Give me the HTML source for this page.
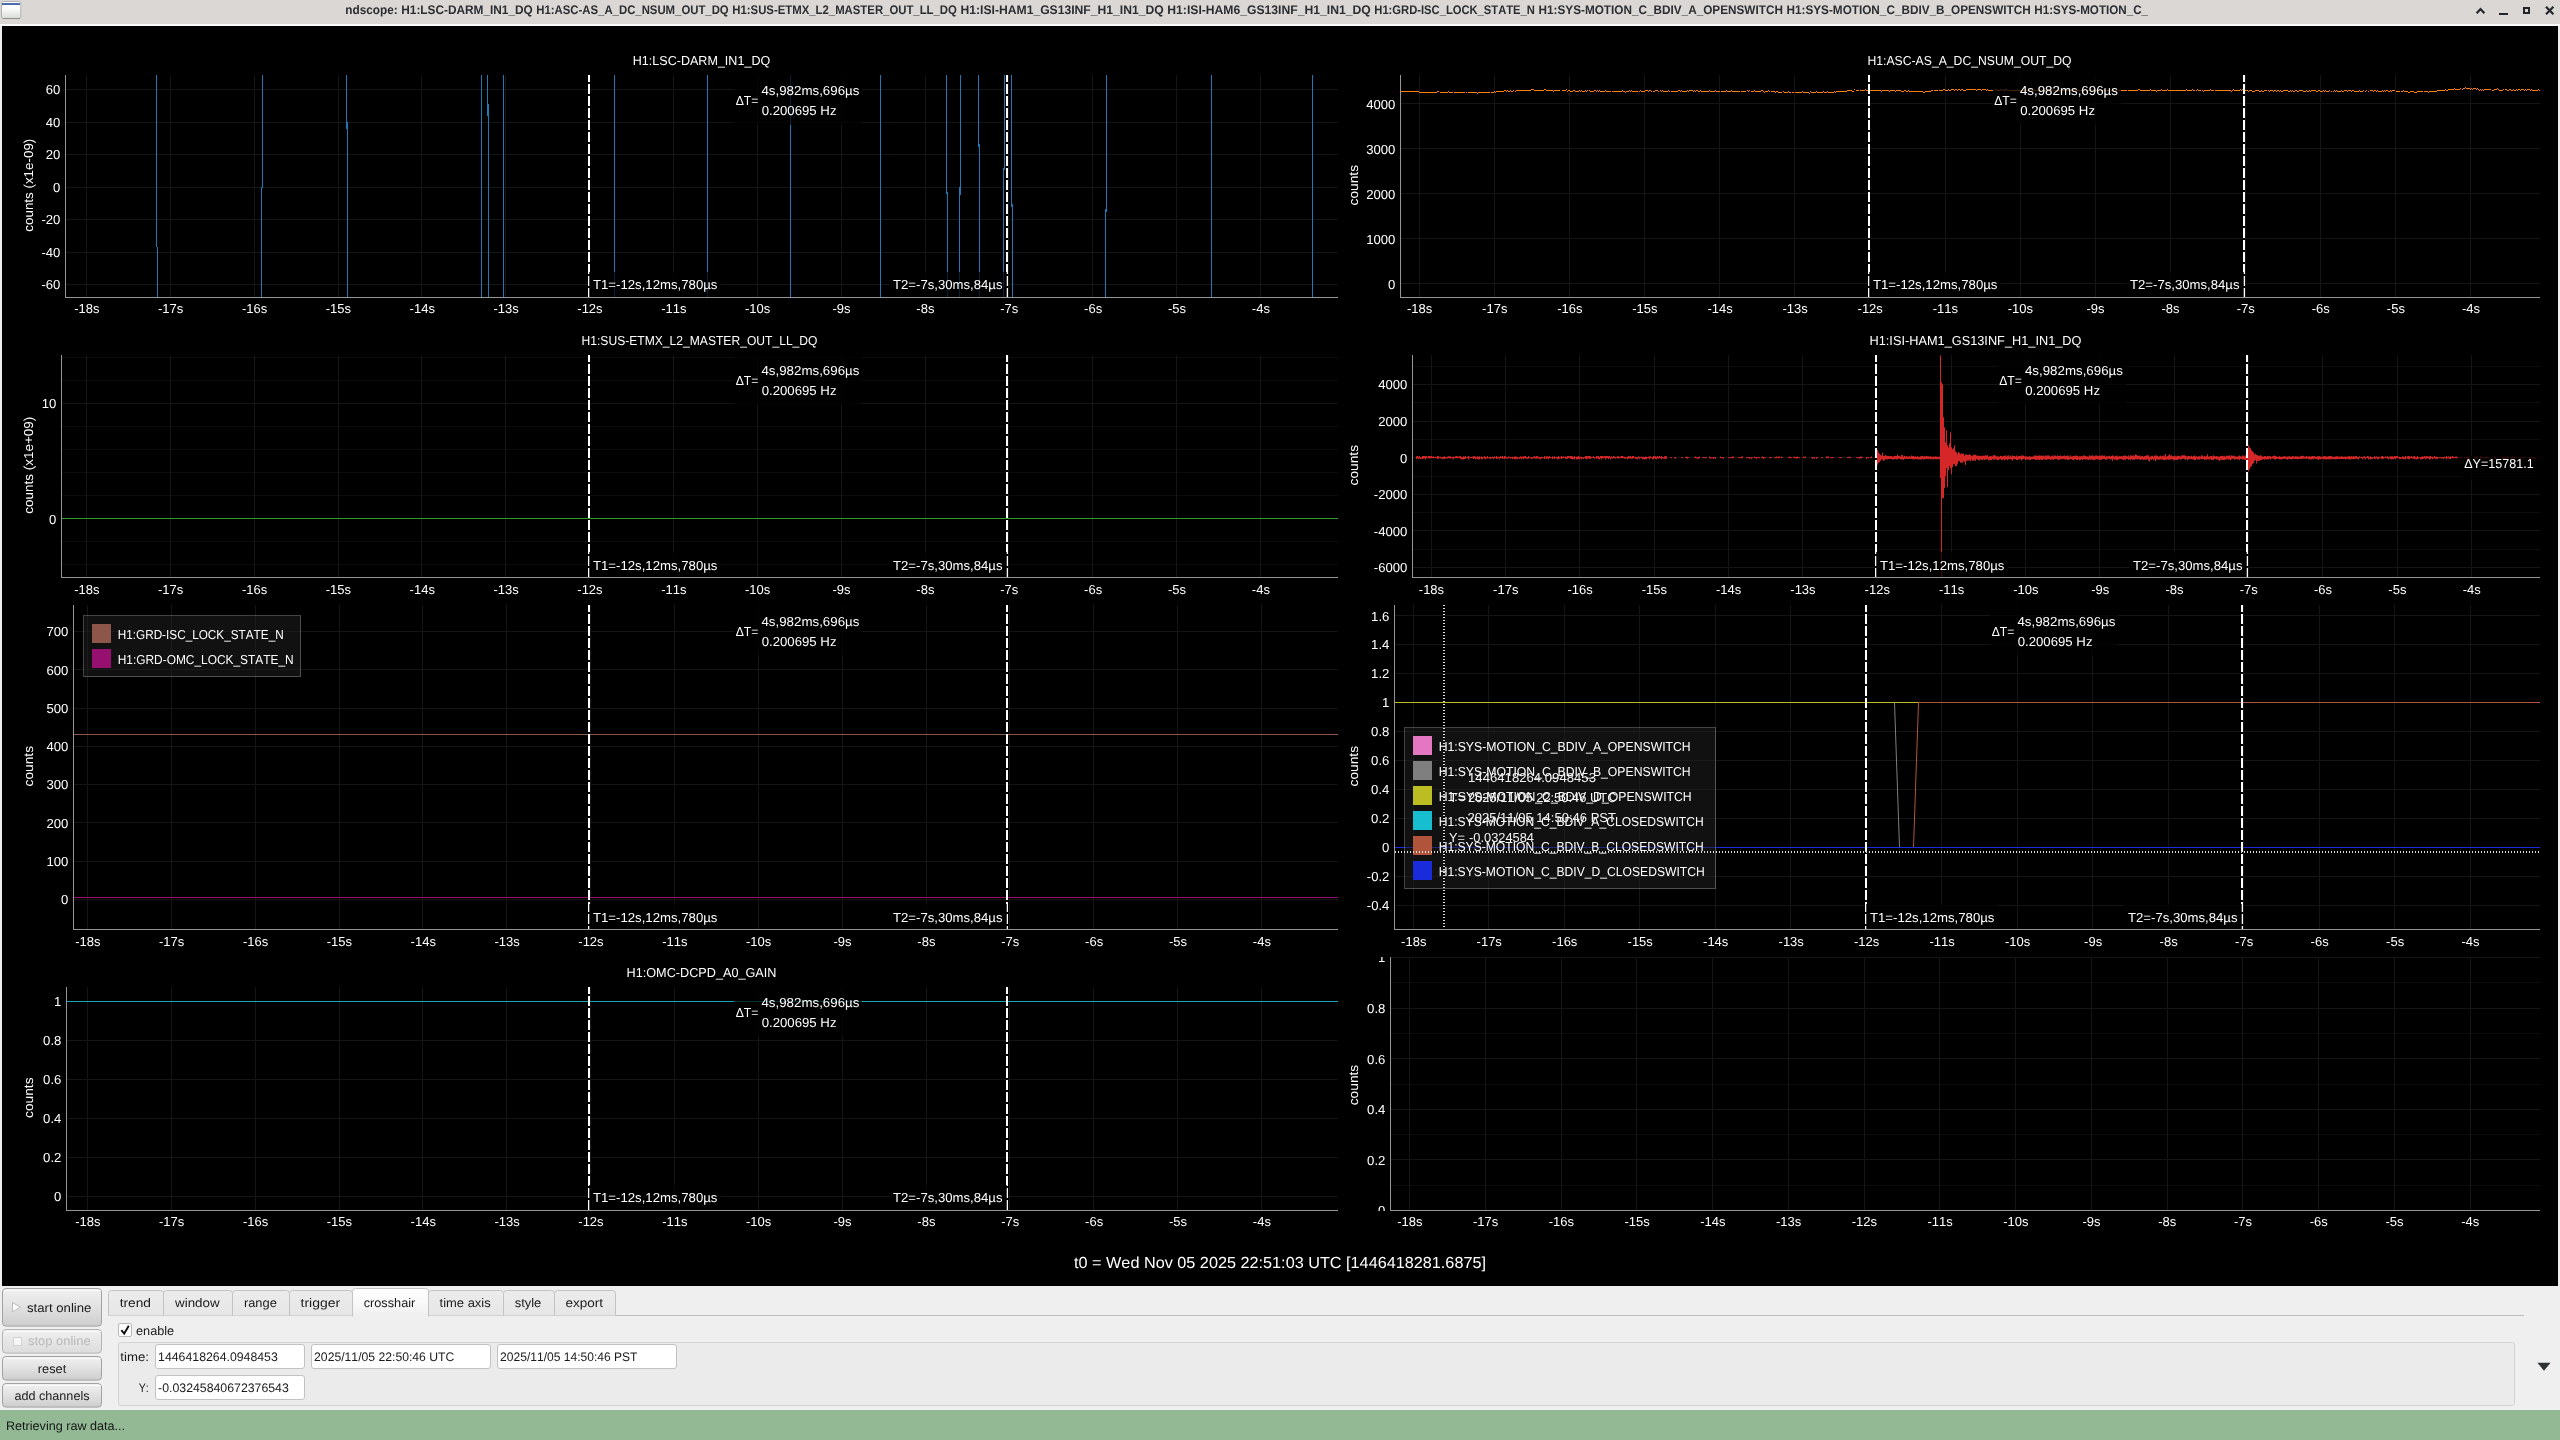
<!DOCTYPE html><html><head><meta charset="utf-8"><title>ndscope</title>
<style>html,body{margin:0;padding:0;background:#efefef;overflow:hidden}svg{display:block;will-change:transform;font-family:"Liberation Sans",sans-serif}text{white-space:pre;font-kerning:none}</style></head><body>
<svg width="2560" height="1440" viewBox="0 0 2560 1440" shape-rendering="crispEdges" text-rendering="geometricPrecision">
<defs>
<linearGradient id="btn" x1="0" y1="0" x2="0" y2="1"><stop offset="0" stop-color="#f1f1f1"/><stop offset="0.5" stop-color="#e1e1e1"/><stop offset="1" stop-color="#cdcdcd"/></linearGradient>
<linearGradient id="btnd" x1="0" y1="0" x2="0" y2="1"><stop offset="0" stop-color="#f0f0f0"/><stop offset="1" stop-color="#dcdcdc"/></linearGradient>
<linearGradient id="ico" x1="0" y1="0" x2="0" y2="1"><stop offset="0" stop-color="#ffffff"/><stop offset="0.35" stop-color="#ffffff"/><stop offset="1" stop-color="#d9dcd8"/></linearGradient>
<linearGradient id="tabg" x1="0" y1="0" x2="0" y2="1"><stop offset="0" stop-color="#ececec"/><stop offset="1" stop-color="#e6e6e6"/></linearGradient>
<clipPath id="clipH"><rect x="1340" y="957" width="60" height="254"/></clipPath>
<linearGradient id="tabs" x1="0" y1="0" x2="0" y2="1"><stop offset="0" stop-color="#ffffff"/><stop offset="0.5" stop-color="#f9f9f9"/><stop offset="1" stop-color="#efefef"/></linearGradient>
</defs>
<rect x="0" y="0" width="2560" height="1440" fill="#efefef"/>
<rect x="0" y="0" width="2560" height="24" fill="#dbd7d4"/>
<rect x="0" y="24" width="2560" height="2" fill="#fbfbfa"/>
<rect x="2" y="26" width="2556" height="1260" fill="#000"/>
<rect x="0" y="1410" width="2560" height="30" fill="#92b993"/>
<rect x="1.5" y="1.5" width="19.3" height="17" rx="2" fill="url(#ico)" stroke="#b3b3b3" shape-rendering="auto"/>
<rect x="2" y="3" width="18.3" height="2" fill="#4a6ea9"/>
<rect x="3" y="18" width="16.5" height="1" fill="#8e8e8c"/>
<text x="345.30" y="14.40" font-size="12.5" fill="#2a2e32" textLength="52.4" lengthAdjust="spacingAndGlyphs" font-weight="bold">ndscope:</text>
<text x="401.30" y="14.40" font-size="12.5" fill="#2a2e32" textLength="131.4" lengthAdjust="spacingAndGlyphs" font-weight="bold">H1:LSC-DARM_IN1_DQ</text>
<text x="536.30" y="14.40" font-size="12.5" fill="#2a2e32" textLength="192.4" lengthAdjust="spacingAndGlyphs" font-weight="bold">H1:ASC-AS_A_DC_NSUM_OUT_DQ</text>
<text x="732.30" y="14.40" font-size="12.5" fill="#2a2e32" textLength="224.6" lengthAdjust="spacingAndGlyphs" font-weight="bold">H1:SUS-ETMX_L2_MASTER_OUT_LL_DQ</text>
<text x="960.50" y="14.40" font-size="12.5" fill="#2a2e32" textLength="203.2" lengthAdjust="spacingAndGlyphs" font-weight="bold">H1:ISI-HAM1_GS13INF_H1_IN1_DQ</text>
<text x="1167.30" y="14.40" font-size="12.5" fill="#2a2e32" textLength="203.4" lengthAdjust="spacingAndGlyphs" font-weight="bold">H1:ISI-HAM6_GS13INF_H1_IN1_DQ</text>
<text x="1374.30" y="14.40" font-size="12.5" fill="#2a2e32" textLength="160.6" lengthAdjust="spacingAndGlyphs" font-weight="bold">H1:GRD-ISC_LOCK_STATE_N</text>
<text x="1538.50" y="14.40" font-size="12.5" fill="#2a2e32" textLength="244.4" lengthAdjust="spacingAndGlyphs" font-weight="bold">H1:SYS-MOTION_C_BDIV_A_OPENSWITCH</text>
<text x="1786.50" y="14.40" font-size="12.5" fill="#2a2e32" textLength="244.2" lengthAdjust="spacingAndGlyphs" font-weight="bold">H1:SYS-MOTION_C_BDIV_B_OPENSWITCH</text>
<text x="2034.30" y="14.40" font-size="12.5" fill="#2a2e32" textLength="113.7" lengthAdjust="spacingAndGlyphs" font-weight="bold">H1:SYS-MOTION_C_</text>
<path d="M2476.6 13.2 L2480.5 9 L2484.4 13.2" fill="none" stroke="#23272b" stroke-width="2.2" shape-rendering="auto"/>
<rect x="2499" y="13" width="9" height="2" fill="#23272b"/>
<rect x="2524" y="8" width="5" height="5" fill="none" stroke="#23272b" stroke-width="2"/>
<path d="M2546 6.8 L2553.4 14.2 M2553.4 6.8 L2546 14.2" fill="none" stroke="#23272b" stroke-width="2.2" shape-rendering="auto"/>
<rect x="66" y="89" width="1272" height="1" fill="#151515"/>
<rect x="66" y="122" width="1272" height="1" fill="#151515"/>
<rect x="66" y="154" width="1272" height="1" fill="#151515"/>
<rect x="66" y="187" width="1272" height="1" fill="#151515"/>
<rect x="66" y="219" width="1272" height="1" fill="#151515"/>
<rect x="66" y="252" width="1272" height="1" fill="#151515"/>
<rect x="66" y="284" width="1272" height="1" fill="#151515"/>
<rect x="86" y="75" width="1" height="222" fill="#151515"/>
<rect x="170" y="75" width="1" height="222" fill="#151515"/>
<rect x="254" y="75" width="1" height="222" fill="#151515"/>
<rect x="338" y="75" width="1" height="222" fill="#151515"/>
<rect x="421" y="75" width="1" height="222" fill="#151515"/>
<rect x="505" y="75" width="1" height="222" fill="#151515"/>
<rect x="589" y="75" width="1" height="222" fill="#151515"/>
<rect x="673" y="75" width="1" height="222" fill="#151515"/>
<rect x="757" y="75" width="1" height="222" fill="#151515"/>
<rect x="841" y="75" width="1" height="222" fill="#151515"/>
<rect x="925" y="75" width="1" height="222" fill="#151515"/>
<rect x="1008" y="75" width="1" height="222" fill="#151515"/>
<rect x="1092" y="75" width="1" height="222" fill="#151515"/>
<rect x="1176" y="75" width="1" height="222" fill="#151515"/>
<rect x="1260" y="75" width="1" height="222" fill="#151515"/>
<rect x="156" y="75" width="1" height="172" fill="#1f77b4"/>
<rect x="157" y="247" width="1" height="50" fill="#1f77b4"/>
<rect x="262" y="75" width="1" height="113" fill="#1f77b4"/>
<rect x="261" y="187" width="1" height="110" fill="#1f77b4"/>
<rect x="346" y="75" width="1" height="54" fill="#1f77b4"/>
<rect x="347" y="122" width="1" height="175" fill="#1f77b4"/>
<rect x="481" y="75" width="1" height="222" fill="#1f77b4"/>
<rect x="487" y="75" width="1" height="41" fill="#1f77b4"/>
<rect x="488" y="104" width="1" height="193" fill="#1f77b4"/>
<rect x="503" y="75" width="1" height="222" fill="#1f77b4"/>
<rect x="614" y="75" width="1" height="222" fill="#1f77b4"/>
<rect x="707" y="75" width="1" height="222" fill="#1f77b4"/>
<rect x="790" y="75" width="1" height="222" fill="#1f77b4"/>
<rect x="880" y="75" width="1" height="222" fill="#1f77b4"/>
<rect x="946" y="75" width="1" height="119" fill="#1f77b4"/>
<rect x="947" y="192" width="1" height="105" fill="#1f77b4"/>
<rect x="960" y="75" width="1" height="120" fill="#1f77b4"/>
<rect x="959" y="187" width="1" height="110" fill="#1f77b4"/>
<rect x="978" y="75" width="1" height="72" fill="#1f77b4"/>
<rect x="979" y="144" width="1" height="153" fill="#1f77b4"/>
<rect x="1004" y="75" width="1" height="95" fill="#1f77b4"/>
<rect x="1003" y="168" width="1" height="129" fill="#1f77b4"/>
<rect x="1011" y="75" width="1" height="132" fill="#1f77b4"/>
<rect x="1012" y="204" width="1" height="93" fill="#1f77b4"/>
<rect x="1106" y="75" width="1" height="137" fill="#1f77b4"/>
<rect x="1105" y="209" width="1" height="88" fill="#1f77b4"/>
<rect x="1211" y="75" width="1" height="222" fill="#1f77b4"/>
<rect x="1312" y="75" width="1" height="222" fill="#1f77b4"/>
<line x1="589" y1="75" x2="589" y2="297" stroke="#fff" stroke-width="2" stroke-dasharray="10 2" stroke-dashoffset="2.8"/>
<line x1="1007" y1="75" x2="1007" y2="297" stroke="#fff" stroke-width="2" stroke-dasharray="10 2" stroke-dashoffset="2.8"/>
<rect x="589" y="272" width="132" height="25" fill="#000" fill-opacity="0.72"/>
<text x="593.00" y="289.00" font-size="13" fill="#ffffff" textLength="124.4" lengthAdjust="spacingAndGlyphs">T1=-12s,12ms,780µs</text>
<rect x="889" y="272" width="118" height="25" fill="#000" fill-opacity="0.72"/>
<text x="1002.50" y="289.00" font-size="13" fill="#ffffff" textLength="109.5" lengthAdjust="spacingAndGlyphs" text-anchor="end">T2=-7s,30ms,84µs</text>
<rect x="734.0" y="75" width="128" height="50" fill="#000" fill-opacity="0.72"/>
<text x="758.30" y="104.60" font-size="13" fill="#ffffff" textLength="22.6" lengthAdjust="spacingAndGlyphs" text-anchor="end">ΔT=</text>
<text x="761.40" y="95.00" font-size="13" fill="#ffffff" textLength="98.0" lengthAdjust="spacingAndGlyphs">4s,982ms,696µs</text>
<text x="761.70" y="115.00" font-size="13" fill="#ffffff" textLength="74.8" lengthAdjust="spacingAndGlyphs">0.200695 Hz</text>
<rect x="65" y="75" width="1" height="223" fill="#969696"/>
<rect x="65" y="297" width="1273" height="1" fill="#969696"/>
<text x="60.40" y="94.30" font-size="13" fill="#ffffff" textLength="14.6" lengthAdjust="spacingAndGlyphs" text-anchor="end">60</text>
<text x="60.40" y="126.80" font-size="13" fill="#ffffff" textLength="14.6" lengthAdjust="spacingAndGlyphs" text-anchor="end">40</text>
<text x="60.40" y="159.30" font-size="13" fill="#ffffff" textLength="14.6" lengthAdjust="spacingAndGlyphs" text-anchor="end">20</text>
<text x="60.40" y="191.80" font-size="13" fill="#ffffff" textLength="7.3" lengthAdjust="spacingAndGlyphs" text-anchor="end">0</text>
<text x="60.40" y="224.30" font-size="13" fill="#ffffff" textLength="19.0" lengthAdjust="spacingAndGlyphs" text-anchor="end">-20</text>
<text x="60.40" y="256.80" font-size="13" fill="#ffffff" textLength="19.0" lengthAdjust="spacingAndGlyphs" text-anchor="end">-40</text>
<text x="60.40" y="289.30" font-size="13" fill="#ffffff" textLength="19.0" lengthAdjust="spacingAndGlyphs" text-anchor="end">-60</text>
<text x="86.80" y="312.90" font-size="13" fill="#ffffff" textLength="25.3" lengthAdjust="spacingAndGlyphs" text-anchor="middle">-18s</text>
<text x="170.66" y="312.90" font-size="13" fill="#ffffff" textLength="25.3" lengthAdjust="spacingAndGlyphs" text-anchor="middle">-17s</text>
<text x="254.53" y="312.90" font-size="13" fill="#ffffff" textLength="25.3" lengthAdjust="spacingAndGlyphs" text-anchor="middle">-16s</text>
<text x="338.39" y="312.90" font-size="13" fill="#ffffff" textLength="25.3" lengthAdjust="spacingAndGlyphs" text-anchor="middle">-15s</text>
<text x="422.25" y="312.90" font-size="13" fill="#ffffff" textLength="25.3" lengthAdjust="spacingAndGlyphs" text-anchor="middle">-14s</text>
<text x="506.11" y="312.90" font-size="13" fill="#ffffff" textLength="25.3" lengthAdjust="spacingAndGlyphs" text-anchor="middle">-13s</text>
<text x="589.97" y="312.90" font-size="13" fill="#ffffff" textLength="25.3" lengthAdjust="spacingAndGlyphs" text-anchor="middle">-12s</text>
<text x="673.83" y="312.90" font-size="13" fill="#ffffff" textLength="25.3" lengthAdjust="spacingAndGlyphs" text-anchor="middle">-11s</text>
<text x="757.69" y="312.90" font-size="13" fill="#ffffff" textLength="25.3" lengthAdjust="spacingAndGlyphs" text-anchor="middle">-10s</text>
<text x="841.55" y="312.90" font-size="13" fill="#ffffff" textLength="18.1" lengthAdjust="spacingAndGlyphs" text-anchor="middle">-9s</text>
<text x="925.41" y="312.90" font-size="13" fill="#ffffff" textLength="18.1" lengthAdjust="spacingAndGlyphs" text-anchor="middle">-8s</text>
<text x="1009.27" y="312.90" font-size="13" fill="#ffffff" textLength="18.1" lengthAdjust="spacingAndGlyphs" text-anchor="middle">-7s</text>
<text x="1093.13" y="312.90" font-size="13" fill="#ffffff" textLength="18.1" lengthAdjust="spacingAndGlyphs" text-anchor="middle">-6s</text>
<text x="1176.99" y="312.90" font-size="13" fill="#ffffff" textLength="18.1" lengthAdjust="spacingAndGlyphs" text-anchor="middle">-5s</text>
<text x="1260.85" y="312.90" font-size="13" fill="#ffffff" textLength="18.1" lengthAdjust="spacingAndGlyphs" text-anchor="middle">-4s</text>
<text x="701.50" y="65.00" font-size="13" fill="#ffffff" textLength="137.5" lengthAdjust="spacingAndGlyphs" text-anchor="middle">H1:LSC-DARM_IN1_DQ</text>
<text x="33.40" y="185.20" font-size="13" fill="#ffffff" textLength="93.0" lengthAdjust="spacingAndGlyphs" text-anchor="middle" transform="rotate(-90 33.40 185.20)">counts (x1e-09)</text>
<rect x="1401" y="103" width="1139" height="1" fill="#151515"/>
<rect x="1401" y="148" width="1139" height="1" fill="#151515"/>
<rect x="1401" y="193" width="1139" height="1" fill="#151515"/>
<rect x="1401" y="238" width="1139" height="1" fill="#151515"/>
<rect x="1401" y="283" width="1139" height="1" fill="#151515"/>
<rect x="1419" y="75" width="1" height="222" fill="#151515"/>
<rect x="1494" y="75" width="1" height="222" fill="#151515"/>
<rect x="1569" y="75" width="1" height="222" fill="#151515"/>
<rect x="1644" y="75" width="1" height="222" fill="#151515"/>
<rect x="1719" y="75" width="1" height="222" fill="#151515"/>
<rect x="1794" y="75" width="1" height="222" fill="#151515"/>
<rect x="1869" y="75" width="1" height="222" fill="#151515"/>
<rect x="1945" y="75" width="1" height="222" fill="#151515"/>
<rect x="2020" y="75" width="1" height="222" fill="#151515"/>
<rect x="2095" y="75" width="1" height="222" fill="#151515"/>
<rect x="2170" y="75" width="1" height="222" fill="#151515"/>
<rect x="2245" y="75" width="1" height="222" fill="#151515"/>
<rect x="2320" y="75" width="1" height="222" fill="#151515"/>
<rect x="2395" y="75" width="1" height="222" fill="#151515"/>
<rect x="2470" y="75" width="1" height="222" fill="#151515"/>
<path d="M1401 91h18v1h-18zM1419 92h18v1h-18zM1437 91h2v1h-2zM1440 92h8v1h-8zM1448 91h1v1h-1zM1449 92h4v1h-4zM1454 92h11v1h-11zM1466 92h1v1h-1zM1468 92h9v1h-9zM1477 93h1v1h-1zM1478 92h12v1h-12zM1491 92h3v1h-3zM1494 91h1v1h-1zM1495 92h1v1h-1zM1496 91h8v1h-8zM1504 90h2v1h-2zM1506 91h1v1h-1zM1507 90h1v1h-1zM1508 91h2v1h-2zM1510 90h1v1h-1zM1511 91h2v1h-2zM1513 90h1v1h-1zM1515 91h1v1h-1zM1516 90h15v1h-15zM1531 89h3v1h-3zM1534 90h10v1h-10zM1544 89h2v1h-2zM1546 90h7v1h-7zM1553 91h1v1h-1zM1554 90h6v1h-6zM1562 90h4v1h-4zM1566 89h1v1h-1zM1567 91h1v1h-1zM1568 90h2v1h-2zM1570 91h3v1h-3zM1573 90h2v1h-2zM1575 91h4v1h-4zM1579 90h1v1h-1zM1580 91h1v1h-1zM1581 90h1v1h-1zM1582 91h3v1h-3zM1585 90h1v1h-1zM1586 91h1v1h-1zM1587 90h1v1h-1zM1589 90h1v1h-1zM1590 91h4v1h-4zM1594 90h2v1h-2zM1596 91h1v1h-1zM1597 90h1v1h-1zM1598 91h1v1h-1zM1599 90h1v1h-1zM1600 91h5v1h-5zM1605 90h1v1h-1zM1606 91h5v1h-5zM1612 91h10v1h-10zM1622 90h1v1h-1zM1623 91h2v1h-2zM1625 92h1v1h-1zM1626 91h3v1h-3zM1629 90h1v1h-1zM1630 91h1v1h-1zM1631 90h1v1h-1zM1632 91h6v1h-6zM1639 91h1v1h-1zM1640 90h1v1h-1zM1641 91h4v1h-4zM1645 90h3v1h-3zM1648 91h1v1h-1zM1649 90h2v1h-2zM1651 91h1v1h-1zM1653 91h2v1h-2zM1655 90h3v1h-3zM1658 91h1v1h-1zM1660 90h1v1h-1zM1661 91h1v1h-1zM1662 90h1v1h-1zM1663 91h5v1h-5zM1668 90h1v1h-1zM1669 91h1v1h-1zM1671 91h7v1h-7zM1678 90h2v1h-2zM1680 91h1v1h-1zM1681 90h1v1h-1zM1682 91h5v1h-5zM1687 90h1v1h-1zM1688 91h1v1h-1zM1689 90h4v1h-4zM1693 91h1v1h-1zM1694 90h1v1h-1zM1695 91h1v1h-1zM1696 90h2v1h-2zM1698 91h2v1h-2zM1700 90h1v1h-1zM1701 91h8v1h-8zM1709 90h1v1h-1zM1710 91h5v1h-5zM1715 90h1v1h-1zM1716 91h4v1h-4zM1721 91h5v1h-5zM1726 90h1v1h-1zM1727 91h4v1h-4zM1731 90h1v1h-1zM1732 91h8v1h-8zM1741 91h5v1h-5zM1747 90h1v1h-1zM1748 91h1v1h-1zM1749 90h1v1h-1zM1751 91h3v1h-3zM1754 90h1v1h-1zM1755 91h6v1h-6zM1761 90h2v1h-2zM1763 91h1v1h-1zM1764 92h1v1h-1zM1765 91h3v1h-3zM1768 90h1v1h-1zM1769 91h1v1h-1zM1771 91h4v1h-4zM1775 92h1v1h-1zM1776 91h2v1h-2zM1778 92h4v1h-4zM1783 91h1v1h-1zM1784 92h4v1h-4zM1788 91h1v1h-1zM1789 92h2v1h-2zM1792 92h2v1h-2zM1795 92h7v1h-7zM1802 91h1v1h-1zM1803 92h6v1h-6zM1809 93h1v1h-1zM1810 91h1v1h-1zM1811 92h5v1h-5zM1816 91h1v1h-1zM1817 92h6v1h-6zM1823 91h1v1h-1zM1824 92h3v1h-3zM1827 91h1v1h-1zM1828 92h6v1h-6zM1834 91h1v1h-1zM1835 92h1v1h-1zM1836 91h11v1h-11zM1847 90h5v1h-5zM1852 91h2v1h-2zM1854 89h1v1h-1zM1856 90h3v1h-3zM1860 90h5v1h-5zM1865 89h1v1h-1zM1866 90h2v1h-2zM1868 89h1v1h-1zM1869 91h1v1h-1zM1870 90h11v1h-11zM1881 91h1v1h-1zM1882 90h7v1h-7zM1889 91h1v1h-1zM1890 90h5v1h-5zM1895 91h1v1h-1zM1896 90h5v1h-5zM1901 91h3v1h-3zM1904 90h2v1h-2zM1906 91h2v1h-2zM1908 90h1v1h-1zM1909 91h14v1h-14zM1923 92h2v1h-2zM1925 91h6v1h-6zM1931 90h2v1h-2zM1934 90h4v1h-4zM1939 90h4v1h-4zM1943 89h2v1h-2zM1945 90h3v1h-3zM1948 89h1v1h-1zM1949 90h2v1h-2zM1951 89h3v1h-3zM1954 90h1v1h-1zM1955 89h2v1h-2zM1957 90h1v1h-1zM1958 89h2v1h-2zM1960 90h1v1h-1zM1961 89h2v1h-2zM1963 90h3v1h-3zM1966 89h10v1h-10zM1976 90h1v1h-1zM1977 89h4v1h-4zM1981 90h1v1h-1zM1982 89h4v1h-4zM1986 90h1v1h-1zM1987 89h1v1h-1zM1988 90h5v1h-5zM1994 90h1v1h-1zM1995 89h2v1h-2zM1997 90h3v1h-3zM2000 89h1v1h-1zM2001 90h1v1h-1zM2002 89h1v1h-1zM2003 90h2v1h-2zM2005 89h2v1h-2zM2007 90h2v1h-2zM2010 90h7v1h-7zM2017 89h1v1h-1zM2018 90h12v1h-12zM2030 89h1v1h-1zM2031 90h5v1h-5zM2037 90h2v1h-2zM2039 89h1v1h-1zM2040 90h1v1h-1zM2041 89h1v1h-1zM2042 90h4v1h-4zM2046 89h1v1h-1zM2047 90h1v1h-1zM2048 89h1v1h-1zM2049 90h3v1h-3zM2052 89h1v1h-1zM2053 90h21v1h-21zM2074 89h1v1h-1zM2075 90h10v1h-10zM2085 89h1v1h-1zM2086 90h5v1h-5zM2091 89h1v1h-1zM2092 90h1v1h-1zM2093 89h1v1h-1zM2094 90h16v1h-16zM2110 91h1v1h-1zM2111 90h1v1h-1zM2112 89h1v1h-1zM2113 90h4v1h-4zM2118 90h9v1h-9zM2128 90h10v1h-10zM2138 89h2v1h-2zM2140 90h10v1h-10zM2150 89h1v1h-1zM2151 90h5v1h-5zM2156 91h1v1h-1zM2157 90h4v1h-4zM2161 89h1v1h-1zM2162 90h5v1h-5zM2167 89h1v1h-1zM2168 90h18v1h-18zM2186 89h1v1h-1zM2187 90h5v1h-5zM2192 89h1v1h-1zM2193 90h2v1h-2zM2196 90h1v1h-1zM2197 89h1v1h-1zM2198 90h3v1h-3zM2202 90h1v1h-1zM2203 91h1v1h-1zM2204 90h6v1h-6zM2210 89h1v1h-1zM2211 90h3v1h-3zM2215 90h16v1h-16zM2231 91h1v1h-1zM2232 90h1v1h-1zM2233 89h1v1h-1zM2234 90h6v1h-6zM2240 89h1v1h-1zM2241 90h1v1h-1zM2242 89h1v1h-1zM2243 90h5v1h-5zM2248 91h1v1h-1zM2249 90h3v1h-3zM2252 91h3v1h-3zM2255 90h4v1h-4zM2259 91h2v1h-2zM2261 90h1v1h-1zM2262 91h2v1h-2zM2264 90h3v1h-3zM2268 90h1v1h-1zM2269 91h1v1h-1zM2270 90h3v1h-3zM2273 91h1v1h-1zM2274 90h2v1h-2zM2276 91h1v1h-1zM2277 90h2v1h-2zM2279 91h1v1h-1zM2280 90h1v1h-1zM2281 91h2v1h-2zM2283 90h5v1h-5zM2288 91h2v1h-2zM2290 90h1v1h-1zM2291 91h1v1h-1zM2292 90h1v1h-1zM2293 91h2v1h-2zM2295 90h2v1h-2zM2297 91h2v1h-2zM2299 90h4v1h-4zM2303 91h3v1h-3zM2306 90h1v1h-1zM2307 91h2v1h-2zM2309 90h1v1h-1zM2310 91h1v1h-1zM2311 90h5v1h-5zM2316 91h2v1h-2zM2318 90h2v1h-2zM2320 91h3v1h-3zM2323 90h1v1h-1zM2324 91h1v1h-1zM2325 90h1v1h-1zM2326 91h3v1h-3zM2329 90h1v1h-1zM2331 91h1v1h-1zM2333 91h1v1h-1zM2334 90h1v1h-1zM2335 91h1v1h-1zM2336 90h1v1h-1zM2337 91h4v1h-4zM2341 90h1v1h-1zM2342 91h2v1h-2zM2344 90h3v1h-3zM2347 91h1v1h-1zM2348 90h3v1h-3zM2351 91h1v1h-1zM2352 90h2v1h-2zM2354 91h5v1h-5zM2359 90h1v1h-1zM2360 91h3v1h-3zM2363 90h1v1h-1zM2365 91h1v1h-1zM2366 90h1v1h-1zM2368 91h1v1h-1zM2370 90h3v1h-3zM2373 91h1v1h-1zM2374 90h2v1h-2zM2376 91h1v1h-1zM2377 90h1v1h-1zM2378 91h4v1h-4zM2382 90h1v1h-1zM2383 91h1v1h-1zM2384 90h1v1h-1zM2385 91h1v1h-1zM2386 90h2v1h-2zM2388 91h2v1h-2zM2390 90h1v1h-1zM2391 91h1v1h-1zM2392 90h3v1h-3zM2396 91h4v1h-4zM2401 91h2v1h-2zM2403 90h1v1h-1zM2404 91h4v1h-4zM2408 92h2v1h-2zM2410 91h4v1h-4zM2414 92h3v1h-3zM2417 91h6v1h-6zM2424 91h4v1h-4zM2428 92h1v1h-1zM2429 91h8v1h-8zM2437 90h8v1h-8zM2445 89h1v1h-1zM2446 90h2v1h-2zM2448 89h6v1h-6zM2454 88h1v1h-1zM2455 89h5v1h-5zM2460 88h1v1h-1zM2462 89h1v1h-1zM2463 88h2v1h-2zM2465 87h1v1h-1zM2466 88h4v1h-4zM2470 89h1v1h-1zM2471 88h1v1h-1zM2472 89h1v1h-1zM2473 88h3v1h-3zM2476 89h1v1h-1zM2477 88h1v1h-1zM2478 89h1v1h-1zM2479 90h1v1h-1zM2480 89h1v1h-1zM2481 90h1v1h-1zM2482 89h1v1h-1zM2483 90h1v1h-1zM2484 89h7v1h-7zM2492 90h2v1h-2zM2494 89h3v1h-3zM2497 88h1v1h-1zM2498 89h1v1h-1zM2499 90h4v1h-4zM2503 89h1v1h-1zM2505 89h2v1h-2zM2507 90h2v1h-2zM2509 89h2v1h-2zM2511 90h2v1h-2zM2513 89h1v1h-1zM2514 90h2v1h-2zM2516 89h1v1h-1zM2517 90h1v1h-1zM2518 89h2v1h-2zM2520 90h1v1h-1zM2521 89h3v1h-3zM2524 90h1v1h-1zM2525 89h1v1h-1zM2526 90h1v1h-1zM2527 89h3v1h-3zM2530 90h1v1h-1zM2531 89h1v1h-1zM2532 90h6v1h-6zM2538 89h1v1h-1zM2539 90h1v1h-1z" fill="#ff7f0e"/>
<line x1="1869" y1="75" x2="1869" y2="297" stroke="#fff" stroke-width="2" stroke-dasharray="10 2" stroke-dashoffset="2.8"/>
<line x1="2244" y1="75" x2="2244" y2="297" stroke="#fff" stroke-width="2" stroke-dasharray="10 2" stroke-dashoffset="2.8"/>
<rect x="1869" y="272" width="132" height="25" fill="#000" fill-opacity="0.72"/>
<text x="1873.00" y="289.00" font-size="13" fill="#ffffff" textLength="124.4" lengthAdjust="spacingAndGlyphs">T1=-12s,12ms,780µs</text>
<rect x="2126" y="272" width="118" height="25" fill="#000" fill-opacity="0.72"/>
<text x="2239.50" y="289.00" font-size="13" fill="#ffffff" textLength="109.5" lengthAdjust="spacingAndGlyphs" text-anchor="end">T2=-7s,30ms,84µs</text>
<rect x="1992.5" y="75" width="128" height="50" fill="#000" fill-opacity="0.72"/>
<text x="2016.80" y="104.60" font-size="13" fill="#ffffff" textLength="22.6" lengthAdjust="spacingAndGlyphs" text-anchor="end">ΔT=</text>
<text x="2019.90" y="95.00" font-size="13" fill="#ffffff" textLength="98.0" lengthAdjust="spacingAndGlyphs">4s,982ms,696µs</text>
<text x="2020.20" y="115.00" font-size="13" fill="#ffffff" textLength="74.8" lengthAdjust="spacingAndGlyphs">0.200695 Hz</text>
<rect x="1400" y="75" width="1" height="223" fill="#969696"/>
<rect x="1400" y="297" width="1140" height="1" fill="#969696"/>
<text x="1395.40" y="108.55" font-size="13" fill="#ffffff" textLength="29.2" lengthAdjust="spacingAndGlyphs" text-anchor="end">4000</text>
<text x="1395.40" y="153.55" font-size="13" fill="#ffffff" textLength="29.2" lengthAdjust="spacingAndGlyphs" text-anchor="end">3000</text>
<text x="1395.40" y="198.55" font-size="13" fill="#ffffff" textLength="29.2" lengthAdjust="spacingAndGlyphs" text-anchor="end">2000</text>
<text x="1395.40" y="243.55" font-size="13" fill="#ffffff" textLength="29.2" lengthAdjust="spacingAndGlyphs" text-anchor="end">1000</text>
<text x="1395.40" y="288.55" font-size="13" fill="#ffffff" textLength="7.3" lengthAdjust="spacingAndGlyphs" text-anchor="end">0</text>
<text x="1419.66" y="312.90" font-size="13" fill="#ffffff" textLength="25.3" lengthAdjust="spacingAndGlyphs" text-anchor="middle">-18s</text>
<text x="1494.75" y="312.90" font-size="13" fill="#ffffff" textLength="25.3" lengthAdjust="spacingAndGlyphs" text-anchor="middle">-17s</text>
<text x="1569.84" y="312.90" font-size="13" fill="#ffffff" textLength="25.3" lengthAdjust="spacingAndGlyphs" text-anchor="middle">-16s</text>
<text x="1644.94" y="312.90" font-size="13" fill="#ffffff" textLength="25.3" lengthAdjust="spacingAndGlyphs" text-anchor="middle">-15s</text>
<text x="1720.03" y="312.90" font-size="13" fill="#ffffff" textLength="25.3" lengthAdjust="spacingAndGlyphs" text-anchor="middle">-14s</text>
<text x="1795.12" y="312.90" font-size="13" fill="#ffffff" textLength="25.3" lengthAdjust="spacingAndGlyphs" text-anchor="middle">-13s</text>
<text x="1870.21" y="312.90" font-size="13" fill="#ffffff" textLength="25.3" lengthAdjust="spacingAndGlyphs" text-anchor="middle">-12s</text>
<text x="1945.31" y="312.90" font-size="13" fill="#ffffff" textLength="25.3" lengthAdjust="spacingAndGlyphs" text-anchor="middle">-11s</text>
<text x="2020.40" y="312.90" font-size="13" fill="#ffffff" textLength="25.3" lengthAdjust="spacingAndGlyphs" text-anchor="middle">-10s</text>
<text x="2095.49" y="312.90" font-size="13" fill="#ffffff" textLength="18.1" lengthAdjust="spacingAndGlyphs" text-anchor="middle">-9s</text>
<text x="2170.58" y="312.90" font-size="13" fill="#ffffff" textLength="18.1" lengthAdjust="spacingAndGlyphs" text-anchor="middle">-8s</text>
<text x="2245.68" y="312.90" font-size="13" fill="#ffffff" textLength="18.1" lengthAdjust="spacingAndGlyphs" text-anchor="middle">-7s</text>
<text x="2320.77" y="312.90" font-size="13" fill="#ffffff" textLength="18.1" lengthAdjust="spacingAndGlyphs" text-anchor="middle">-6s</text>
<text x="2395.86" y="312.90" font-size="13" fill="#ffffff" textLength="18.1" lengthAdjust="spacingAndGlyphs" text-anchor="middle">-5s</text>
<text x="2470.95" y="312.90" font-size="13" fill="#ffffff" textLength="18.1" lengthAdjust="spacingAndGlyphs" text-anchor="middle">-4s</text>
<text x="1969.50" y="65.00" font-size="13" fill="#ffffff" textLength="204.0" lengthAdjust="spacingAndGlyphs" text-anchor="middle">H1:ASC-AS_A_DC_NSUM_OUT_DQ</text>
<text x="1358.00" y="185.20" font-size="13" fill="#ffffff" textLength="40.5" lengthAdjust="spacingAndGlyphs" text-anchor="middle" transform="rotate(-90 1358.00 185.20)">counts</text>
<rect x="62" y="357" width="1276" height="1" fill="#0d0d0d"/>
<rect x="62" y="380" width="1276" height="1" fill="#0d0d0d"/>
<rect x="62" y="426" width="1276" height="1" fill="#0d0d0d"/>
<rect x="62" y="449" width="1276" height="1" fill="#0d0d0d"/>
<rect x="62" y="472" width="1276" height="1" fill="#0d0d0d"/>
<rect x="62" y="495" width="1276" height="1" fill="#0d0d0d"/>
<rect x="62" y="541" width="1276" height="1" fill="#0d0d0d"/>
<rect x="62" y="564" width="1276" height="1" fill="#0d0d0d"/>
<rect x="62" y="403" width="1276" height="1" fill="#151515"/>
<rect x="62" y="518" width="1276" height="1" fill="#151515"/>
<rect x="86" y="355" width="1" height="222" fill="#151515"/>
<rect x="170" y="355" width="1" height="222" fill="#151515"/>
<rect x="254" y="355" width="1" height="222" fill="#151515"/>
<rect x="338" y="355" width="1" height="222" fill="#151515"/>
<rect x="421" y="355" width="1" height="222" fill="#151515"/>
<rect x="505" y="355" width="1" height="222" fill="#151515"/>
<rect x="589" y="355" width="1" height="222" fill="#151515"/>
<rect x="673" y="355" width="1" height="222" fill="#151515"/>
<rect x="757" y="355" width="1" height="222" fill="#151515"/>
<rect x="841" y="355" width="1" height="222" fill="#151515"/>
<rect x="925" y="355" width="1" height="222" fill="#151515"/>
<rect x="1008" y="355" width="1" height="222" fill="#151515"/>
<rect x="1092" y="355" width="1" height="222" fill="#151515"/>
<rect x="1176" y="355" width="1" height="222" fill="#151515"/>
<rect x="1260" y="355" width="1" height="222" fill="#151515"/>
<rect x="62" y="518" width="1276" height="1" fill="#2ca02c"/>
<line x1="589" y1="355" x2="589" y2="577" stroke="#fff" stroke-width="2" stroke-dasharray="10 2" stroke-dashoffset="2.8"/>
<line x1="1007" y1="355" x2="1007" y2="577" stroke="#fff" stroke-width="2" stroke-dasharray="10 2" stroke-dashoffset="2.8"/>
<rect x="589" y="552" width="132" height="25" fill="#000" fill-opacity="0.72"/>
<text x="593.00" y="570.00" font-size="13" fill="#ffffff" textLength="124.4" lengthAdjust="spacingAndGlyphs">T1=-12s,12ms,780µs</text>
<rect x="889" y="552" width="118" height="25" fill="#000" fill-opacity="0.72"/>
<text x="1002.50" y="570.00" font-size="13" fill="#ffffff" textLength="109.5" lengthAdjust="spacingAndGlyphs" text-anchor="end">T2=-7s,30ms,84µs</text>
<rect x="734.0" y="355" width="128" height="50" fill="#000" fill-opacity="0.72"/>
<text x="758.30" y="384.60" font-size="13" fill="#ffffff" textLength="22.6" lengthAdjust="spacingAndGlyphs" text-anchor="end">ΔT=</text>
<text x="761.40" y="375.00" font-size="13" fill="#ffffff" textLength="98.0" lengthAdjust="spacingAndGlyphs">4s,982ms,696µs</text>
<text x="761.70" y="395.00" font-size="13" fill="#ffffff" textLength="74.8" lengthAdjust="spacingAndGlyphs">0.200695 Hz</text>
<rect x="61" y="355" width="1" height="223" fill="#969696"/>
<rect x="61" y="577" width="1277" height="1" fill="#969696"/>
<text x="56.40" y="408.05" font-size="13" fill="#ffffff" textLength="14.6" lengthAdjust="spacingAndGlyphs" text-anchor="end">10</text>
<text x="56.40" y="523.55" font-size="13" fill="#ffffff" textLength="7.3" lengthAdjust="spacingAndGlyphs" text-anchor="end">0</text>
<text x="86.80" y="593.90" font-size="13" fill="#ffffff" textLength="25.3" lengthAdjust="spacingAndGlyphs" text-anchor="middle">-18s</text>
<text x="170.66" y="593.90" font-size="13" fill="#ffffff" textLength="25.3" lengthAdjust="spacingAndGlyphs" text-anchor="middle">-17s</text>
<text x="254.53" y="593.90" font-size="13" fill="#ffffff" textLength="25.3" lengthAdjust="spacingAndGlyphs" text-anchor="middle">-16s</text>
<text x="338.39" y="593.90" font-size="13" fill="#ffffff" textLength="25.3" lengthAdjust="spacingAndGlyphs" text-anchor="middle">-15s</text>
<text x="422.25" y="593.90" font-size="13" fill="#ffffff" textLength="25.3" lengthAdjust="spacingAndGlyphs" text-anchor="middle">-14s</text>
<text x="506.11" y="593.90" font-size="13" fill="#ffffff" textLength="25.3" lengthAdjust="spacingAndGlyphs" text-anchor="middle">-13s</text>
<text x="589.97" y="593.90" font-size="13" fill="#ffffff" textLength="25.3" lengthAdjust="spacingAndGlyphs" text-anchor="middle">-12s</text>
<text x="673.83" y="593.90" font-size="13" fill="#ffffff" textLength="25.3" lengthAdjust="spacingAndGlyphs" text-anchor="middle">-11s</text>
<text x="757.69" y="593.90" font-size="13" fill="#ffffff" textLength="25.3" lengthAdjust="spacingAndGlyphs" text-anchor="middle">-10s</text>
<text x="841.55" y="593.90" font-size="13" fill="#ffffff" textLength="18.1" lengthAdjust="spacingAndGlyphs" text-anchor="middle">-9s</text>
<text x="925.41" y="593.90" font-size="13" fill="#ffffff" textLength="18.1" lengthAdjust="spacingAndGlyphs" text-anchor="middle">-8s</text>
<text x="1009.27" y="593.90" font-size="13" fill="#ffffff" textLength="18.1" lengthAdjust="spacingAndGlyphs" text-anchor="middle">-7s</text>
<text x="1093.13" y="593.90" font-size="13" fill="#ffffff" textLength="18.1" lengthAdjust="spacingAndGlyphs" text-anchor="middle">-6s</text>
<text x="1176.99" y="593.90" font-size="13" fill="#ffffff" textLength="18.1" lengthAdjust="spacingAndGlyphs" text-anchor="middle">-5s</text>
<text x="1260.85" y="593.90" font-size="13" fill="#ffffff" textLength="18.1" lengthAdjust="spacingAndGlyphs" text-anchor="middle">-4s</text>
<text x="699.50" y="345.00" font-size="13" fill="#ffffff" textLength="236.0" lengthAdjust="spacingAndGlyphs" text-anchor="middle">H1:SUS-ETMX_L2_MASTER_OUT_LL_DQ</text>
<text x="33.40" y="465.20" font-size="13" fill="#ffffff" textLength="97.0" lengthAdjust="spacingAndGlyphs" text-anchor="middle" transform="rotate(-90 33.40 465.20)">counts (x1e+09)</text>
<rect x="1413" y="366" width="1127" height="1" fill="#0d0d0d"/>
<rect x="1413" y="402" width="1127" height="1" fill="#0d0d0d"/>
<rect x="1413" y="439" width="1127" height="1" fill="#0d0d0d"/>
<rect x="1413" y="476" width="1127" height="1" fill="#0d0d0d"/>
<rect x="1413" y="512" width="1127" height="1" fill="#0d0d0d"/>
<rect x="1413" y="549" width="1127" height="1" fill="#0d0d0d"/>
<rect x="1413" y="384" width="1127" height="1" fill="#151515"/>
<rect x="1413" y="421" width="1127" height="1" fill="#151515"/>
<rect x="1413" y="457" width="1127" height="1" fill="#151515"/>
<rect x="1413" y="494" width="1127" height="1" fill="#151515"/>
<rect x="1413" y="530" width="1127" height="1" fill="#151515"/>
<rect x="1413" y="567" width="1127" height="1" fill="#151515"/>
<rect x="1431" y="355" width="1" height="222" fill="#151515"/>
<rect x="1505" y="355" width="1" height="222" fill="#151515"/>
<rect x="1579" y="355" width="1" height="222" fill="#151515"/>
<rect x="1654" y="355" width="1" height="222" fill="#151515"/>
<rect x="1728" y="355" width="1" height="222" fill="#151515"/>
<rect x="1802" y="355" width="1" height="222" fill="#151515"/>
<rect x="1876" y="355" width="1" height="222" fill="#151515"/>
<rect x="1951" y="355" width="1" height="222" fill="#151515"/>
<rect x="2025" y="355" width="1" height="222" fill="#151515"/>
<rect x="2099" y="355" width="1" height="222" fill="#151515"/>
<rect x="2174" y="355" width="1" height="222" fill="#151515"/>
<rect x="2248" y="355" width="1" height="222" fill="#151515"/>
<rect x="2322" y="355" width="1" height="222" fill="#151515"/>
<rect x="2397" y="355" width="1" height="222" fill="#151515"/>
<rect x="2471" y="355" width="1" height="222" fill="#151515"/>
<path d="M1416.5 456.3V459.1M1417.5 456.0V458.2M1418.5 456.7V459.1M1419.5 456.0V458.2M1420.5 457.2V459.1M1421.5 457.2V458.7M1422.5 456.0V459.1M1423.5 456.0V458.7M1424.5 456.0V458.2M1425.5 456.3V459.4M1426.5 456.0V458.2M1427.5 457.2V458.2M1428.5 456.0V458.2M1429.5 456.0V458.7M1430.5 456.3V458.2M1431.5 456.0V458.2M1432.5 456.7V458.2M1433.5 456.3V458.2M1434.5 457.2V458.2M1435.5 456.7V458.2M1436.5 457.2V458.2M1437.5 456.0V458.7M1438.5 456.0V458.7M1439.5 457.2V458.2M1440.5 456.7V458.2M1441.5 457.2V458.7M1442.5 457.2V459.1M1443.5 456.7V458.7M1444.5 456.3V459.1M1445.5 457.2V458.7M1446.5 457.2V458.2M1447.5 456.7V458.7M1448.5 456.3V458.2M1449.5 456.3V458.2M1450.5 456.3V458.7M1451.5 457.2V458.2M1452.5 456.7V458.2M1453.5 456.7V459.4M1454.5 457.2V458.2M1455.5 456.3V458.2M1456.5 456.0V458.2M1457.5 456.3V458.2M1458.5 456.7V458.2M1459.5 456.3V458.2M1460.5 456.0V458.7M1461.5 457.2V459.4M1462.5 457.2V459.4M1463.5 456.3V459.4M1464.5 456.7V459.1M1465.5 456.0V458.7M1466.5 457.2V458.2M1467.5 456.7V458.2M1468.5 456.0V459.4M1469.5 457.2V458.2M1470.5 457.2V458.2M1471.5 456.7V458.2M1472.5 456.7V458.2M1473.5 456.3V459.1M1474.5 456.0V458.2M1475.5 456.7V459.4M1476.5 457.2V458.7M1477.5 456.3V459.1M1478.5 456.7V459.4M1479.5 456.3V459.4M1480.5 457.2V458.2M1481.5 456.3V459.4M1482.5 457.2V459.1M1483.5 457.2V458.2M1484.5 456.0V458.7M1485.5 457.2V459.4M1486.5 457.2V458.2M1487.5 456.0V458.7M1488.5 457.2V458.2M1489.5 457.2V458.7M1490.5 456.7V459.1M1491.5 457.2V458.2M1492.5 456.7V458.2M1493.5 457.2V459.1M1494.5 456.3V458.2M1495.5 457.2V458.2M1496.5 456.0V459.1M1497.5 457.2V458.7M1498.5 456.7V458.2M1499.5 457.2V459.4M1500.5 456.0V458.2M1501.5 456.7V458.2M1502.5 456.0V459.1M1503.5 457.2V458.2M1504.5 456.0V459.1M1505.5 456.3V458.2M1506.5 457.2V458.7M1507.5 457.2V458.7M1508.5 456.3V458.2M1509.5 457.2V458.2M1510.5 456.7V458.7M1511.5 457.2V458.2M1512.5 456.7V459.1M1513.5 457.2V458.2M1514.5 456.7V459.1M1515.5 456.3V459.4M1516.5 456.7V458.7M1517.5 457.2V459.4M1518.5 457.2V458.2M1519.5 457.2V459.1M1520.5 456.3V458.2M1521.5 456.7V459.4M1522.5 456.7V458.2M1523.5 456.3V459.1M1524.5 456.3V458.2M1525.5 456.0V458.7M1526.5 457.2V458.7M1527.5 457.2V458.7M1528.5 456.0V458.7M1529.5 457.2V458.2M1530.5 457.2V458.2M1531.5 457.2V459.1M1532.5 457.2V458.7M1533.5 456.7V458.2M1534.5 456.0V458.2M1535.5 457.2V458.7M1536.5 456.0V458.7M1537.5 456.3V458.2M1538.5 456.7V458.7M1539.5 457.2V458.7M1540.5 457.2V459.4M1541.5 456.7V458.7M1542.5 457.2V458.2M1543.5 457.2V458.2M1544.5 456.0V459.1M1545.5 457.2V458.2M1546.5 456.3V459.1M1547.5 456.3V458.2M1548.5 456.7V459.4M1549.5 456.0V458.2M1550.5 457.2V458.2M1551.5 457.2V458.2M1552.5 456.3V459.1M1553.5 457.2V458.2M1554.5 456.3V459.1M1555.5 457.2V458.2M1556.5 456.7V458.2M1557.5 457.2V459.4M1558.5 456.0V459.1M1559.5 457.2V458.7M1560.5 457.2V458.2M1561.5 456.0V459.1M1562.5 456.7V458.2M1563.5 456.3V458.2M1564.5 457.2V458.2M1565.5 456.3V458.7M1566.5 457.2V459.1M1567.5 456.0V458.7M1568.5 456.0V458.2M1569.5 456.3V458.2M1570.5 456.0V458.7M1571.5 456.0V459.1M1572.5 456.3V459.4M1573.5 457.2V459.1M1574.5 456.0V459.4M1575.5 457.2V458.2M1576.5 456.7V459.4M1577.5 456.7V459.4M1578.5 456.0V459.1M1579.5 456.7V459.1M1580.5 457.2V458.7M1581.5 456.7V459.4M1582.5 457.2V458.2M1583.5 457.2V459.1M1584.5 457.2V458.2M1585.5 456.0V458.7M1586.5 456.0V459.4M1587.5 456.3V458.7M1588.5 456.0V458.2M1589.5 456.0V459.1M1590.5 456.3V458.7M1591.5 457.2V458.2M1592.5 457.2V458.2M1593.5 456.0V458.2M1594.5 457.2V458.7M1595.5 457.2V458.2M1596.5 456.0V458.7M1597.5 456.3V458.2M1598.5 456.0V459.1M1599.5 457.2V459.4M1600.5 456.0V458.2M1601.5 456.0V459.4M1602.5 456.0V458.2M1603.5 456.3V458.2M1604.5 456.3V458.2M1605.5 456.0V459.4M1606.5 456.0V458.2M1607.5 456.0V458.2M1608.5 456.3V459.1M1609.5 456.0V458.2M1610.5 457.2V459.4M1611.5 456.3V458.2M1612.5 457.2V458.7M1613.5 456.0V458.2M1614.5 456.3V458.2M1615.5 457.2V458.7M1616.5 457.2V458.2M1617.5 456.0V458.2M1618.5 456.3V458.7M1619.5 457.2V458.2M1620.5 456.3V458.2M1621.5 456.0V458.2M1622.5 456.0V458.2M1623.5 456.7V458.2M1624.5 456.7V458.7M1625.5 457.2V458.7M1626.5 457.2V458.2M1627.5 456.7V459.4M1628.5 456.0V458.7M1629.5 456.3V458.2M1630.5 456.0V458.7M1631.5 457.2V458.7M1632.5 456.0V458.7M1633.5 456.0V458.2M1634.5 457.2V458.2M1635.5 456.7V458.7M1636.5 457.2V459.1M1637.5 457.2V459.4M1638.5 456.3V458.2M1639.5 457.2V459.1M1640.5 457.2V458.2M1641.5 456.7V458.2M1642.5 457.2V459.4M1643.5 456.7V459.1M1644.5 457.2V459.4M1645.5 456.7V459.4M1646.5 456.7V459.1M1647.5 457.2V458.2M1648.5 456.7V458.2M1649.5 456.3V459.4M1650.5 456.3V458.2M1651.5 457.2V458.2M1652.5 457.2V459.4M1653.5 456.0V459.1M1654.5 456.3V458.2M1655.5 456.3V459.1M1656.5 457.2V459.4M1657.5 456.0V458.2M1658.5 456.7V458.7M1659.5 456.0V458.2M1660.5 456.7V458.2M1661.5 456.0V459.4M1662.5 457.2V458.2M1663.5 457.2V458.7M1664.5 456.3V458.7M1665.5 456.0V459.1M1666.5 456.3V458.7M1670.5 457.2V458.2M1671.5 457.2V458.2M1674.5 457.2V458.2M1675.5 457.2V458.9M1681.5 457.2V458.2M1682.5 457.2V458.2M1685.5 457.2V458.2M1686.5 456.5V458.2M1687.5 457.2V458.9M1688.5 457.2V458.2M1694.5 457.2V458.2M1695.5 456.5V458.2M1696.5 457.2V458.2M1697.5 457.2V458.9M1698.5 457.2V458.9M1699.5 456.5V458.2M1702.5 457.2V458.2M1703.5 457.2V458.2M1704.5 457.2V458.2M1705.5 457.2V458.2M1706.5 457.2V458.2M1709.5 456.5V458.2M1710.5 457.2V458.9M1711.5 457.2V458.2M1712.5 457.2V458.2M1713.5 457.2V458.9M1714.5 457.2V458.2M1715.5 457.2V458.9M1720.5 456.5V458.2M1721.5 457.2V458.2M1722.5 457.2V458.2M1723.5 457.2V458.9M1728.5 457.2V458.2M1729.5 457.2V458.2M1730.5 457.2V458.2M1731.5 457.2V458.2M1732.5 456.5V458.2M1733.5 456.5V458.2M1738.5 457.2V458.2M1739.5 457.2V458.2M1740.5 457.2V458.2M1741.5 456.5V458.2M1742.5 456.5V458.2M1746.5 457.2V458.2M1747.5 457.2V458.2M1748.5 457.2V458.2M1749.5 457.2V458.9M1750.5 457.2V458.2M1751.5 457.2V458.9M1752.5 457.2V458.2M1754.5 456.5V458.2M1755.5 457.2V458.2M1756.5 457.2V458.9M1757.5 457.2V458.2M1758.5 457.2V458.2M1759.5 457.2V458.2M1761.5 457.2V458.2M1762.5 456.5V458.2M1763.5 457.2V458.9M1764.5 457.2V458.2M1765.5 457.2V458.2M1769.5 457.2V458.2M1770.5 457.2V458.2M1771.5 457.2V458.2M1774.5 457.2V458.2M1775.5 457.2V458.2M1776.5 456.5V458.2M1777.5 457.2V458.2M1778.5 456.5V458.2M1779.5 456.5V458.2M1781.5 456.5V458.2M1782.5 457.2V458.2M1788.5 457.2V458.2M1789.5 456.5V458.2M1790.5 457.2V458.2M1791.5 457.2V458.2M1793.5 457.2V458.2M1794.5 456.5V458.2M1795.5 457.2V458.2M1796.5 457.2V458.9M1797.5 456.5V458.2M1798.5 457.2V458.2M1799.5 457.2V458.2M1803.5 456.5V458.2M1804.5 457.2V458.2M1805.5 456.5V458.2M1811.5 457.2V458.2M1812.5 457.2V458.9M1813.5 457.2V458.2M1814.5 457.2V458.9M1816.5 457.2V458.9M1817.5 457.2V458.2M1821.5 457.2V458.2M1822.5 457.2V458.2M1826.5 456.5V458.2M1827.5 456.5V458.2M1828.5 456.5V458.2M1830.5 457.2V458.2M1831.5 457.2V458.2M1832.5 457.2V458.2M1833.5 457.2V458.2M1839.5 457.2V458.2M1840.5 457.2V458.2M1841.5 457.2V458.2M1847.5 457.2V458.2M1848.5 457.2V458.2M1849.5 456.5V458.2M1850.5 457.2V458.2M1856.5 457.2V458.2M1857.5 457.2V458.2M1858.5 457.2V458.2M1859.5 457.2V458.9M1860.5 456.5V458.2M1861.5 456.5V458.2M1862.5 457.2V458.2M1866.5 457.2V458.9M1867.5 457.2V458.2M1868.5 457.2V458.2M1870.5 457.2V458.2M1871.5 456.5V458.2M1877.5 449.8V464.7M1878.5 452.3V463.2M1879.5 453.8V462.2M1880.5 454.9V460.7M1881.5 455.5V459.5M1882.5 452.5V459.4M1883.5 456.0V460.9M1884.5 456.0V460.3M1885.5 455.1V459.1M1886.5 455.7V459.5M1887.5 455.9V459.4M1888.5 455.9V459.1M1889.5 456.2V459.1M1890.5 456.0V459.1M1891.5 456.1V458.9M1892.5 456.5V459.6M1893.5 456.4V459.3M1894.5 456.0V459.4M1895.5 455.8V458.9M1896.5 456.0V459.6M1897.5 454.6V459.0M1898.5 455.8V458.7M1899.5 456.0V458.8M1900.5 456.7V459.0M1901.5 454.9V459.7M1902.5 455.1V459.4M1903.5 456.6V459.8M1904.5 455.8V459.0M1905.5 456.3V458.8M1906.5 456.1V458.8M1907.5 456.7V459.0M1908.5 456.5V458.9M1909.5 456.1V458.9M1910.5 456.8V458.7M1911.5 455.5V459.0M1912.5 456.2V459.2M1913.5 455.8V459.6M1914.5 456.5V459.1M1915.5 456.4V459.1M1916.5 456.8V459.3M1917.5 456.2V459.0M1918.5 456.7V459.5M1919.5 456.8V459.4M1920.5 456.3V459.5M1921.5 456.1V459.5M1922.5 455.8V458.9M1923.5 456.5V459.4M1924.5 456.2V459.4M1925.5 456.3V458.9M1926.5 455.9V459.1M1927.5 456.3V458.9M1928.5 456.3V459.2M1929.5 456.6V458.8M1930.5 456.2V459.5M1931.5 456.8V459.1M1932.5 456.7V458.8M1933.5 456.5V459.5M1934.5 456.8V459.1M1935.5 456.4V459.2M1936.5 456.7V459.4M1937.5 456.6V459.0M1938.5 456.8V458.9M1939.5 456.7V459.4M1940.5 355.3V478.2M1941.5 382.3V577.0M1942.5 384.3V498.2M1943.5 417.3V498.2M1944.5 427.3V488.2M1945.5 442.3V476.2M1946.5 430.3V468.2M1947.5 445.3V487.2M1948.5 447.3V470.2M1949.5 443.3V466.2M1950.5 432.3V468.2M1951.5 447.3V474.2M1952.5 449.3V467.2M1953.5 448.3V464.2M1954.5 445.3V464.2M1955.5 451.3V466.2M1956.5 452.3V466.2M1957.5 454.2V463.9M1958.5 451.8V460.9M1959.5 453.0V461.5M1960.5 454.2V462.6M1961.5 453.4V462.7M1962.5 453.8V462.9M1963.5 453.5V460.9M1964.5 455.7V461.9M1965.5 454.5V465.0M1966.5 454.4V460.8M1967.5 455.0V460.7M1968.5 454.9V460.7M1969.5 454.3V460.3M1970.5 454.9V461.2M1971.5 455.8V459.4M1972.5 456.1V460.9M1973.5 454.8V460.7M1974.5 454.9V460.0M1975.5 454.7V460.9M1976.5 455.4V459.1M1977.5 455.9V459.7M1978.5 455.4V460.0M1979.5 455.9V460.7M1980.5 456.0V459.4M1981.5 455.8V459.8M1982.5 455.9V460.4M1983.5 455.6V459.0M1984.5 455.8V459.9M1985.5 455.2V459.4M1986.5 455.6V459.7M1987.5 455.1V459.0M1988.5 456.5V460.3M1989.5 456.3V460.4M1990.5 455.8V460.0M1991.5 456.3V460.2M1992.5 456.3V459.0M1993.5 455.2V459.5M1994.5 455.2V459.9M1995.5 455.6V458.9M1996.5 456.3V459.7M1997.5 456.4V460.2M1998.5 456.4V460.0M1999.5 456.6V459.4M2000.5 455.9V459.0M2001.5 456.0V459.8M2002.5 456.5V460.2M2003.5 455.9V459.3M2004.5 455.9V460.2M2005.5 455.4V459.7M2006.5 456.5V459.2M2007.5 455.7V460.2M2008.5 455.3V459.3M2009.5 456.6V459.3M2010.5 455.6V459.1M2011.5 456.6V459.6M2012.5 455.6V460.7M2013.5 456.0V459.0M2014.5 455.9V459.3M2015.5 456.5V459.1M2016.5 455.5V460.1M2017.5 456.6V460.1M2018.5 455.9V459.0M2019.5 455.9V459.5M2020.5 456.1V459.1M2021.5 455.5V460.4M2022.5 455.4V459.5M2023.5 455.7V459.1M2024.5 456.3V458.8M2025.5 456.3V460.1M2026.5 456.4V459.6M2027.5 456.6V459.2M2028.5 456.6V459.7M2029.5 456.2V459.9M2030.5 456.7V460.1M2031.5 456.6V459.1M2032.5 456.5V459.3M2033.5 456.4V459.3M2034.5 455.6V459.5M2035.5 455.4V459.9M2036.5 455.8V460.0M2037.5 455.7V459.3M2038.5 455.8V459.8M2039.5 455.4V460.1M2040.5 455.6V459.6M2041.5 455.6V460.0M2042.5 456.0V460.1M2043.5 455.6V459.2M2044.5 456.4V459.4M2045.5 455.4V459.8M2046.5 455.6V459.9M2047.5 455.5V459.4M2048.5 455.5V459.3M2049.5 455.6V459.2M2050.5 456.5V459.9M2051.5 456.1V459.3M2052.5 455.5V459.7M2053.5 456.3V459.8M2054.5 455.6V459.0M2055.5 455.5V459.1M2056.5 456.2V459.1M2057.5 455.4V459.4M2058.5 456.0V460.2M2059.5 455.9V459.5M2060.5 455.4V459.4M2061.5 456.2V458.9M2062.5 456.0V459.3M2063.5 455.8V458.9M2064.5 455.4V459.3M2065.5 456.2V459.5M2066.5 456.0V459.3M2067.5 455.5V459.8M2068.5 455.6V460.0M2069.5 456.7V459.3M2070.5 455.5V459.0M2071.5 456.6V459.3M2072.5 456.3V459.9M2073.5 456.1V460.2M2074.5 455.8V459.3M2075.5 455.7V459.2M2076.5 455.5V459.9M2077.5 456.0V460.0M2078.5 456.5V459.2M2079.5 456.2V460.2M2080.5 456.3V460.1M2081.5 456.1V459.0M2082.5 456.2V460.1M2083.5 455.4V459.4M2084.5 455.6V459.2M2085.5 456.0V459.6M2086.5 456.3V459.3M2087.5 456.3V459.7M2088.5 456.6V460.0M2089.5 455.4V459.2M2090.5 455.9V459.9M2091.5 455.6V459.0M2092.5 455.3V459.7M2093.5 456.1V460.1M2094.5 456.2V459.9M2095.5 455.5V459.5M2096.5 455.4V459.0M2097.5 456.1V459.5M2098.5 455.9V459.4M2099.5 455.5V459.9M2100.5 455.8V459.9M2101.5 455.4V459.8M2102.5 455.5V459.0M2103.5 455.8V459.2M2104.5 455.5V459.2M2105.5 456.6V459.7M2106.5 456.2V459.8M2107.5 456.2V458.8M2108.5 456.3V458.9M2109.5 455.6V458.9M2110.5 456.4V459.7M2111.5 455.9V459.1M2112.5 455.5V461.1M2113.5 455.6V458.8M2114.5 456.6V459.7M2115.5 456.1V459.5M2116.5 455.5V460.2M2117.5 456.2V460.2M2118.5 456.5V459.4M2119.5 456.1V459.3M2120.5 456.3V459.1M2121.5 456.1V459.1M2122.5 456.3V459.6M2123.5 455.7V460.1M2124.5 455.7V459.4M2125.5 455.5V459.8M2126.5 456.2V459.0M2127.5 456.3V458.9M2128.5 455.4V459.9M2129.5 456.6V459.0M2130.5 455.3V460.1M2131.5 455.5V459.0M2132.5 456.0V459.7M2133.5 455.4V459.8M2134.5 456.1V459.8M2135.5 454.3V459.0M2136.5 454.9V459.3M2137.5 455.6V459.4M2138.5 456.0V458.9M2139.5 455.5V459.5M2140.5 456.4V460.1M2141.5 455.9V459.0M2142.5 455.9V459.7M2143.5 456.6V459.8M2144.5 456.1V459.7M2145.5 455.8V459.8M2146.5 455.4V459.6M2147.5 455.3V459.1M2148.5 455.5V460.7M2149.5 456.6V461.5M2150.5 456.6V459.1M2151.5 455.8V460.1M2152.5 455.7V459.0M2153.5 456.6V460.2M2154.5 455.6V459.0M2155.5 455.6V461.3M2156.5 455.5V459.6M2157.5 455.8V459.6M2158.5 456.6V459.6M2159.5 456.3V459.8M2160.5 455.6V459.4M2161.5 456.4V459.4M2162.5 455.9V459.3M2163.5 455.5V460.0M2164.5 456.3V459.9M2165.5 454.0V459.9M2166.5 456.5V459.8M2167.5 456.1V459.4M2168.5 455.4V459.8M2169.5 454.3V459.8M2170.5 455.5V459.4M2171.5 455.4V459.4M2172.5 456.3V459.3M2173.5 456.1V460.2M2174.5 455.6V460.0M2175.5 456.3V459.8M2176.5 456.4V460.0M2177.5 455.6V459.9M2178.5 456.0V458.9M2179.5 455.8V459.3M2180.5 456.5V459.5M2181.5 455.4V459.4M2182.5 455.3V458.9M2183.5 455.4V458.8M2184.5 455.3V459.0M2185.5 455.7V459.8M2186.5 456.3V458.8M2187.5 456.3V460.2M2188.5 455.8V459.6M2189.5 456.1V458.9M2190.5 456.5V459.0M2191.5 455.7V459.2M2192.5 456.6V459.2M2193.5 456.1V459.8M2194.5 455.5V460.0M2195.5 456.4V460.0M2196.5 456.3V458.8M2197.5 456.5V459.7M2198.5 456.4V459.0M2199.5 456.2V459.7M2200.5 456.6V458.8M2201.5 455.4V459.3M2202.5 455.6V459.2M2203.5 456.5V459.1M2204.5 456.2V459.9M2205.5 456.4V459.3M2206.5 456.0V460.0M2207.5 454.3V459.1M2208.5 456.5V459.4M2209.5 456.5V459.5M2210.5 456.1V459.0M2211.5 456.0V460.1M2212.5 456.4V459.8M2213.5 455.4V460.0M2214.5 456.0V459.1M2215.5 456.4V458.9M2216.5 456.1V459.8M2217.5 456.3V459.1M2218.5 456.5V460.2M2219.5 456.7V460.8M2220.5 456.0V459.8M2221.5 456.0V459.6M2222.5 455.6V460.1M2223.5 456.2V460.1M2224.5 455.9V460.1M2225.5 456.6V459.4M2226.5 455.7V459.6M2227.5 455.7V458.8M2228.5 456.0V459.5M2229.5 455.3V459.7M2230.5 456.4V460.2M2231.5 455.4V459.3M2232.5 455.8V458.8M2233.5 455.5V458.8M2234.5 456.1V459.6M2235.5 456.4V459.0M2236.5 456.5V459.5M2237.5 456.6V459.1M2238.5 456.1V459.4M2239.5 455.5V460.1M2240.5 456.1V458.9M2241.5 456.7V459.2M2242.5 455.5V459.4M2243.5 455.6V459.7M2244.5 456.4V459.7M2245.5 455.4V460.1M2246.5 455.4V459.6M2247.5 448.3V462.2M2248.5 445.3V471.2M2249.5 447.3V469.2M2250.5 448.3V467.2M2251.5 450.3V466.2M2252.5 451.3V464.2M2253.5 452.3V463.2M2254.5 454.5V460.9M2255.5 453.6V459.9M2256.5 454.8V463.5M2257.5 455.1V460.9M2258.5 456.0V461.1M2259.5 455.7V460.7M2260.5 455.1V460.3M2261.5 456.2V459.8M2262.5 456.4V459.7M2263.5 456.6V459.2M2264.5 456.1V459.8M2265.5 456.0V459.2M2266.5 456.8V459.4M2267.5 455.9V459.4M2268.5 456.2V459.3M2269.5 456.1V458.9M2270.5 456.3V459.4M2271.5 456.7V458.6M2272.5 456.2V458.7M2273.5 456.2V458.6M2274.5 455.5V459.5M2275.5 456.0V459.5M2276.5 456.4V458.9M2277.5 456.7V458.6M2278.5 456.8V459.2M2279.5 456.2V459.3M2280.5 456.7V459.4M2281.5 456.8V459.2M2282.5 456.7V459.3M2283.5 456.4V458.8M2284.5 456.2V458.8M2285.5 456.4V458.7M2286.5 456.8V459.2M2287.5 456.5V459.7M2288.5 456.3V458.8M2289.5 456.3V459.1M2290.5 456.6V459.2M2291.5 456.7V459.3M2292.5 456.0V459.3M2293.5 456.3V458.6M2294.5 456.9V459.1M2295.5 456.1V459.0M2296.5 456.4V459.1M2297.5 456.4V459.3M2298.5 456.6V459.0M2299.5 456.7V458.9M2300.5 456.2V458.9M2301.5 456.1V459.2M2302.5 455.7V458.8M2303.5 456.1V458.7M2304.5 456.6V458.7M2305.5 456.5V458.7M2306.5 456.0V458.6M2307.5 456.8V458.7M2308.5 456.4V459.3M2309.5 456.2V459.0M2310.5 456.7V459.5M2311.5 456.2V459.4M2312.5 456.0V459.1M2313.5 456.3V459.3M2314.5 456.0V458.7M2315.5 456.7V458.8M2316.5 456.8V459.4M2317.5 456.2V458.9M2318.5 456.2V460.2M2319.5 456.2V459.1M2320.5 456.6V459.4M2321.5 456.6V458.9M2322.5 456.8V458.8M2323.5 456.3V459.4M2324.5 456.1V459.3M2325.5 456.2V459.3M2326.5 456.6V459.4M2327.5 456.6V459.3M2328.5 456.1V459.4M2329.5 456.2V459.2M2330.5 456.1V459.1M2331.5 456.2V459.3M2332.5 456.6V458.8M2333.5 456.9V459.3M2334.5 456.8V459.3M2335.5 456.5V459.3M2336.5 456.3V459.4M2337.5 456.2V458.9M2338.5 456.8V459.1M2339.5 456.5V459.0M2340.5 456.7V458.9M2341.5 456.3V459.1M2342.5 456.4V459.0M2343.5 456.8V459.1M2344.5 456.6V458.8M2345.5 456.7V459.4M2346.5 456.6V459.2M2347.5 456.6V458.9M2348.5 456.4V459.0M2349.5 456.0V459.5M2350.5 456.7V459.4M2351.5 456.1V458.9M2352.5 456.9V459.0M2353.5 456.0V459.1M2354.5 456.8V459.2M2355.5 456.0V458.7M2356.5 456.0V458.7M2357.5 457.2V459.1M2358.5 457.2V459.4M2359.5 456.3V458.2M2360.5 457.2V458.2M2361.5 456.7V458.2M2362.5 457.2V459.4M2363.5 456.7V458.2M2364.5 456.0V458.2M2365.5 457.2V459.4M2366.5 457.2V458.2M2367.5 456.0V458.2M2368.5 456.3V459.4M2369.5 457.2V458.7M2370.5 456.3V459.4M2371.5 457.2V459.1M2372.5 457.2V459.1M2373.5 457.2V458.2M2374.5 456.0V459.1M2375.5 457.2V458.7M2376.5 456.3V458.2M2377.5 457.2V459.4M2378.5 456.7V459.1M2379.5 457.2V458.2M2380.5 457.2V458.2M2381.5 456.3V458.7M2382.5 456.0V459.1M2383.5 456.7V458.7M2384.5 457.2V458.2M2385.5 456.3V458.2M2386.5 457.2V458.2M2387.5 456.0V458.7M2388.5 457.2V459.4M2389.5 456.7V458.2M2390.5 456.3V459.1M2391.5 456.3V459.4M2392.5 456.3V459.1M2393.5 456.7V459.1M2394.5 456.0V458.2M2395.5 456.3V459.4M2396.5 456.0V458.2M2397.5 456.0V458.2M2398.5 457.2V458.2M2399.5 456.7V459.1M2400.5 457.2V459.1M2401.5 457.2V458.7M2402.5 456.3V458.7M2403.5 456.7V459.1M2404.5 457.2V459.1M2405.5 456.0V459.4M2406.5 457.2V458.2M2407.5 456.3V458.7M2408.5 456.0V459.1M2409.5 456.3V459.4M2410.5 456.7V458.2M2411.5 456.0V458.2M2412.5 457.2V458.7M2413.5 456.3V458.7M2414.5 456.0V459.4M2415.5 457.2V458.7M2416.5 457.2V459.4M2417.5 456.0V459.1M2418.5 457.2V458.7M2419.5 457.2V458.2M2420.5 457.2V459.4M2421.5 456.7V459.1M2422.5 456.3V459.1M2423.5 456.7V458.7M2424.5 456.0V458.2M2425.5 456.7V459.4M2426.5 456.0V458.7M2427.5 456.3V458.2M2428.5 456.7V458.7M2429.5 456.3V459.4M2430.5 456.0V459.4M2431.5 456.7V458.2M2432.5 456.7V459.1M2433.5 457.2V458.7M2434.5 456.0V458.2M2435.5 456.7V458.7M2436.5 456.7V459.1M2437.5 457.2V459.1M2438.5 457.2V458.2M2439.5 457.2V458.2M2440.5 457.2V458.2M2441.5 457.2V458.7M2442.5 457.2V458.2M2443.5 457.2V459.1M2444.5 456.7V458.2M2445.5 457.2V458.2M2446.5 456.0V459.4M2447.5 457.2V458.2M2448.5 456.3V458.2M2449.5 457.2V459.1M2450.5 456.3V459.1M2451.5 457.2V458.2M2452.5 456.0V458.2M2453.5 456.7V458.2M2454.5 457.2V458.2M2455.5 456.5V458.2M2456.5 456.5V458.2M2457.5 457.2V458.2M2460.5 457.2V458.2M2461.5 456.5V458.2M2464.5 457.2V458.2M2465.5 457.2V458.9M2466.5 457.2V458.2M2467.5 456.5V458.2M2468.5 457.2V458.9M2469.5 457.2V458.2M2474.5 457.2V458.2M2475.5 457.2V458.2M2476.5 456.5V458.2M2477.5 457.2V458.2M2480.5 456.5V458.2M2481.5 456.5V458.2M2482.5 457.2V458.2M2484.5 457.2V458.2M2485.5 457.2V458.2M2486.5 456.5V458.2M2487.5 457.2V458.2M2488.5 457.2V458.2M2494.5 457.2V458.2M2495.5 457.2V458.9M2501.5 457.2V458.2M2502.5 457.2V458.2M2503.5 457.2V458.9M2504.5 457.2V458.9M2505.5 457.2V458.9M2506.5 457.2V458.2M2507.5 456.5V458.2M2510.5 457.2V458.2M2511.5 457.2V458.2M2512.5 456.5V458.2M2513.5 457.2V458.2M2514.5 457.2V458.2M2515.5 457.2V458.2M2516.5 456.5V458.2M2520.5 457.2V458.2M2521.5 457.2V458.2M2522.5 457.2V458.2M2523.5 457.2V458.2M2524.5 457.2V458.2M2529.5 457.2V458.9M2530.5 457.2V458.2M2531.5 457.2V458.2M2532.5 457.2V458.2M2533.5 457.2V458.2M2534.5 457.2V458.9" fill="none" stroke="#d62728" stroke-width="1" shape-rendering="auto"/>
<line x1="1876" y1="355" x2="1876" y2="577" stroke="#fff" stroke-width="2" stroke-dasharray="10 2" stroke-dashoffset="2.8"/>
<line x1="2247" y1="355" x2="2247" y2="577" stroke="#fff" stroke-width="2" stroke-dasharray="10 2" stroke-dashoffset="2.8"/>
<rect x="1876" y="552" width="132" height="25" fill="#000" fill-opacity="0.72"/>
<text x="1880.00" y="570.00" font-size="13" fill="#ffffff" textLength="124.4" lengthAdjust="spacingAndGlyphs">T1=-12s,12ms,780µs</text>
<rect x="2129" y="552" width="118" height="25" fill="#000" fill-opacity="0.72"/>
<text x="2242.50" y="570.00" font-size="13" fill="#ffffff" textLength="109.5" lengthAdjust="spacingAndGlyphs" text-anchor="end">T2=-7s,30ms,84µs</text>
<rect x="1997.5" y="355" width="128" height="50" fill="#000" fill-opacity="0.72"/>
<text x="2021.80" y="384.60" font-size="13" fill="#ffffff" textLength="22.6" lengthAdjust="spacingAndGlyphs" text-anchor="end">ΔT=</text>
<text x="2024.90" y="375.00" font-size="13" fill="#ffffff" textLength="98.0" lengthAdjust="spacingAndGlyphs">4s,982ms,696µs</text>
<text x="2025.20" y="395.00" font-size="13" fill="#ffffff" textLength="74.8" lengthAdjust="spacingAndGlyphs">0.200695 Hz</text>
<rect x="1412" y="355" width="1" height="223" fill="#969696"/>
<rect x="1412" y="577" width="1128" height="1" fill="#969696"/>
<text x="1407.40" y="389.30" font-size="13" fill="#ffffff" textLength="29.2" lengthAdjust="spacingAndGlyphs" text-anchor="end">4000</text>
<text x="1407.40" y="425.90" font-size="13" fill="#ffffff" textLength="29.2" lengthAdjust="spacingAndGlyphs" text-anchor="end">2000</text>
<text x="1407.40" y="462.50" font-size="13" fill="#ffffff" textLength="7.3" lengthAdjust="spacingAndGlyphs" text-anchor="end">0</text>
<text x="1407.40" y="499.10" font-size="13" fill="#ffffff" textLength="33.6" lengthAdjust="spacingAndGlyphs" text-anchor="end">-2000</text>
<text x="1407.40" y="535.70" font-size="13" fill="#ffffff" textLength="33.6" lengthAdjust="spacingAndGlyphs" text-anchor="end">-4000</text>
<text x="1407.40" y="572.30" font-size="13" fill="#ffffff" textLength="33.6" lengthAdjust="spacingAndGlyphs" text-anchor="end">-6000</text>
<text x="1431.47" y="593.90" font-size="13" fill="#ffffff" textLength="25.3" lengthAdjust="spacingAndGlyphs" text-anchor="middle">-18s</text>
<text x="1505.77" y="593.90" font-size="13" fill="#ffffff" textLength="25.3" lengthAdjust="spacingAndGlyphs" text-anchor="middle">-17s</text>
<text x="1580.07" y="593.90" font-size="13" fill="#ffffff" textLength="25.3" lengthAdjust="spacingAndGlyphs" text-anchor="middle">-16s</text>
<text x="1654.37" y="593.90" font-size="13" fill="#ffffff" textLength="25.3" lengthAdjust="spacingAndGlyphs" text-anchor="middle">-15s</text>
<text x="1728.67" y="593.90" font-size="13" fill="#ffffff" textLength="25.3" lengthAdjust="spacingAndGlyphs" text-anchor="middle">-14s</text>
<text x="1802.97" y="593.90" font-size="13" fill="#ffffff" textLength="25.3" lengthAdjust="spacingAndGlyphs" text-anchor="middle">-13s</text>
<text x="1877.27" y="593.90" font-size="13" fill="#ffffff" textLength="25.3" lengthAdjust="spacingAndGlyphs" text-anchor="middle">-12s</text>
<text x="1951.57" y="593.90" font-size="13" fill="#ffffff" textLength="25.3" lengthAdjust="spacingAndGlyphs" text-anchor="middle">-11s</text>
<text x="2025.88" y="593.90" font-size="13" fill="#ffffff" textLength="25.3" lengthAdjust="spacingAndGlyphs" text-anchor="middle">-10s</text>
<text x="2100.18" y="593.90" font-size="13" fill="#ffffff" textLength="18.1" lengthAdjust="spacingAndGlyphs" text-anchor="middle">-9s</text>
<text x="2174.48" y="593.90" font-size="13" fill="#ffffff" textLength="18.1" lengthAdjust="spacingAndGlyphs" text-anchor="middle">-8s</text>
<text x="2248.78" y="593.90" font-size="13" fill="#ffffff" textLength="18.1" lengthAdjust="spacingAndGlyphs" text-anchor="middle">-7s</text>
<text x="2323.08" y="593.90" font-size="13" fill="#ffffff" textLength="18.1" lengthAdjust="spacingAndGlyphs" text-anchor="middle">-6s</text>
<text x="2397.38" y="593.90" font-size="13" fill="#ffffff" textLength="18.1" lengthAdjust="spacingAndGlyphs" text-anchor="middle">-5s</text>
<text x="2471.68" y="593.90" font-size="13" fill="#ffffff" textLength="18.1" lengthAdjust="spacingAndGlyphs" text-anchor="middle">-4s</text>
<text x="1975.50" y="345.00" font-size="13" fill="#ffffff" textLength="212.0" lengthAdjust="spacingAndGlyphs" text-anchor="middle">H1:ISI-HAM1_GS13INF_H1_IN1_DQ</text>
<text x="1358.00" y="465.20" font-size="13" fill="#ffffff" textLength="40.5" lengthAdjust="spacingAndGlyphs" text-anchor="middle" transform="rotate(-90 1358.00 465.20)">counts</text>
<rect x="2459" y="456" width="81" height="24" fill="#000" fill-opacity="0.7"/>
<text x="2533.70" y="467.80" font-size="13" fill="#ffffff" textLength="69.5" lengthAdjust="spacingAndGlyphs" text-anchor="end">ΔY=15781.1</text>
<rect x="74" y="631" width="1264" height="1" fill="#151515"/>
<rect x="74" y="669" width="1264" height="1" fill="#151515"/>
<rect x="74" y="708" width="1264" height="1" fill="#151515"/>
<rect x="74" y="746" width="1264" height="1" fill="#151515"/>
<rect x="74" y="784" width="1264" height="1" fill="#151515"/>
<rect x="74" y="822" width="1264" height="1" fill="#151515"/>
<rect x="74" y="861" width="1264" height="1" fill="#151515"/>
<rect x="74" y="899" width="1264" height="1" fill="#151515"/>
<rect x="87" y="605" width="1" height="324" fill="#151515"/>
<rect x="171" y="605" width="1" height="324" fill="#151515"/>
<rect x="255" y="605" width="1" height="324" fill="#151515"/>
<rect x="339" y="605" width="1" height="324" fill="#151515"/>
<rect x="422" y="605" width="1" height="324" fill="#151515"/>
<rect x="506" y="605" width="1" height="324" fill="#151515"/>
<rect x="590" y="605" width="1" height="324" fill="#151515"/>
<rect x="674" y="605" width="1" height="324" fill="#151515"/>
<rect x="758" y="605" width="1" height="324" fill="#151515"/>
<rect x="842" y="605" width="1" height="324" fill="#151515"/>
<rect x="926" y="605" width="1" height="324" fill="#151515"/>
<rect x="1009" y="605" width="1" height="324" fill="#151515"/>
<rect x="1093" y="605" width="1" height="324" fill="#151515"/>
<rect x="1177" y="605" width="1" height="324" fill="#151515"/>
<rect x="1261" y="605" width="1" height="324" fill="#151515"/>
<rect x="74" y="734" width="1264" height="1" fill="#8c564b"/>
<rect x="74" y="897" width="1264" height="1" fill="#98106f"/>
<line x1="589" y1="605" x2="589" y2="929" stroke="#fff" stroke-width="2" stroke-dasharray="10 2" stroke-dashoffset="2.8"/>
<line x1="1007" y1="605" x2="1007" y2="929" stroke="#fff" stroke-width="2" stroke-dasharray="10 2" stroke-dashoffset="2.8"/>
<rect x="589" y="904" width="132" height="25" fill="#000" fill-opacity="0.72"/>
<text x="593.00" y="922.00" font-size="13" fill="#ffffff" textLength="124.4" lengthAdjust="spacingAndGlyphs">T1=-12s,12ms,780µs</text>
<rect x="889" y="904" width="118" height="25" fill="#000" fill-opacity="0.72"/>
<text x="1002.50" y="922.00" font-size="13" fill="#ffffff" textLength="109.5" lengthAdjust="spacingAndGlyphs" text-anchor="end">T2=-7s,30ms,84µs</text>
<rect x="734.0" y="605" width="128" height="50" fill="#000" fill-opacity="0.72"/>
<text x="758.30" y="635.60" font-size="13" fill="#ffffff" textLength="22.6" lengthAdjust="spacingAndGlyphs" text-anchor="end">ΔT=</text>
<text x="761.40" y="626.00" font-size="13" fill="#ffffff" textLength="98.0" lengthAdjust="spacingAndGlyphs">4s,982ms,696µs</text>
<text x="761.70" y="646.00" font-size="13" fill="#ffffff" textLength="74.8" lengthAdjust="spacingAndGlyphs">0.200695 Hz</text>
<rect x="73" y="605" width="1" height="325" fill="#969696"/>
<rect x="73" y="929" width="1265" height="1" fill="#969696"/>
<text x="68.40" y="636.40" font-size="13" fill="#ffffff" textLength="21.9" lengthAdjust="spacingAndGlyphs" text-anchor="end">700</text>
<text x="68.40" y="674.66" font-size="13" fill="#ffffff" textLength="21.9" lengthAdjust="spacingAndGlyphs" text-anchor="end">600</text>
<text x="68.40" y="712.91" font-size="13" fill="#ffffff" textLength="21.9" lengthAdjust="spacingAndGlyphs" text-anchor="end">500</text>
<text x="68.40" y="751.17" font-size="13" fill="#ffffff" textLength="21.9" lengthAdjust="spacingAndGlyphs" text-anchor="end">400</text>
<text x="68.40" y="789.43" font-size="13" fill="#ffffff" textLength="21.9" lengthAdjust="spacingAndGlyphs" text-anchor="end">300</text>
<text x="68.40" y="827.69" font-size="13" fill="#ffffff" textLength="21.9" lengthAdjust="spacingAndGlyphs" text-anchor="end">200</text>
<text x="68.40" y="865.94" font-size="13" fill="#ffffff" textLength="21.9" lengthAdjust="spacingAndGlyphs" text-anchor="end">100</text>
<text x="68.40" y="904.20" font-size="13" fill="#ffffff" textLength="7.3" lengthAdjust="spacingAndGlyphs" text-anchor="end">0</text>
<text x="87.80" y="945.90" font-size="13" fill="#ffffff" textLength="25.3" lengthAdjust="spacingAndGlyphs" text-anchor="middle">-18s</text>
<text x="171.66" y="945.90" font-size="13" fill="#ffffff" textLength="25.3" lengthAdjust="spacingAndGlyphs" text-anchor="middle">-17s</text>
<text x="255.53" y="945.90" font-size="13" fill="#ffffff" textLength="25.3" lengthAdjust="spacingAndGlyphs" text-anchor="middle">-16s</text>
<text x="339.39" y="945.90" font-size="13" fill="#ffffff" textLength="25.3" lengthAdjust="spacingAndGlyphs" text-anchor="middle">-15s</text>
<text x="423.25" y="945.90" font-size="13" fill="#ffffff" textLength="25.3" lengthAdjust="spacingAndGlyphs" text-anchor="middle">-14s</text>
<text x="507.11" y="945.90" font-size="13" fill="#ffffff" textLength="25.3" lengthAdjust="spacingAndGlyphs" text-anchor="middle">-13s</text>
<text x="590.97" y="945.90" font-size="13" fill="#ffffff" textLength="25.3" lengthAdjust="spacingAndGlyphs" text-anchor="middle">-12s</text>
<text x="674.83" y="945.90" font-size="13" fill="#ffffff" textLength="25.3" lengthAdjust="spacingAndGlyphs" text-anchor="middle">-11s</text>
<text x="758.69" y="945.90" font-size="13" fill="#ffffff" textLength="25.3" lengthAdjust="spacingAndGlyphs" text-anchor="middle">-10s</text>
<text x="842.55" y="945.90" font-size="13" fill="#ffffff" textLength="18.1" lengthAdjust="spacingAndGlyphs" text-anchor="middle">-9s</text>
<text x="926.41" y="945.90" font-size="13" fill="#ffffff" textLength="18.1" lengthAdjust="spacingAndGlyphs" text-anchor="middle">-8s</text>
<text x="1010.27" y="945.90" font-size="13" fill="#ffffff" textLength="18.1" lengthAdjust="spacingAndGlyphs" text-anchor="middle">-7s</text>
<text x="1094.13" y="945.90" font-size="13" fill="#ffffff" textLength="18.1" lengthAdjust="spacingAndGlyphs" text-anchor="middle">-6s</text>
<text x="1177.99" y="945.90" font-size="13" fill="#ffffff" textLength="18.1" lengthAdjust="spacingAndGlyphs" text-anchor="middle">-5s</text>
<text x="1261.85" y="945.90" font-size="13" fill="#ffffff" textLength="18.1" lengthAdjust="spacingAndGlyphs" text-anchor="middle">-4s</text>
<text x="33.40" y="766.20" font-size="13" fill="#ffffff" textLength="40.5" lengthAdjust="spacingAndGlyphs" text-anchor="middle" transform="rotate(-90 33.40 766.20)">counts</text>
<rect x="83.5" y="615.5" width="217" height="61" fill="#222" fill-opacity="0.5" stroke="#aaa" stroke-opacity="0.4"/>
<rect x="92" y="624" width="19" height="19" fill="#8c564b"/>
<text x="117.70" y="638.50" font-size="13" fill="#ffffff" textLength="166.0" lengthAdjust="spacingAndGlyphs">H1:GRD-ISC_LOCK_STATE_N</text>
<rect x="92" y="649" width="19" height="19" fill="#98106f"/>
<text x="117.70" y="663.50" font-size="13" fill="#ffffff" textLength="176.0" lengthAdjust="spacingAndGlyphs">H1:GRD-OMC_LOCK_STATE_N</text>
<rect x="1395" y="615" width="1145" height="1" fill="#151515"/>
<rect x="1395" y="644" width="1145" height="1" fill="#151515"/>
<rect x="1395" y="673" width="1145" height="1" fill="#151515"/>
<rect x="1395" y="702" width="1145" height="1" fill="#151515"/>
<rect x="1395" y="731" width="1145" height="1" fill="#151515"/>
<rect x="1395" y="760" width="1145" height="1" fill="#151515"/>
<rect x="1395" y="789" width="1145" height="1" fill="#151515"/>
<rect x="1395" y="818" width="1145" height="1" fill="#151515"/>
<rect x="1395" y="847" width="1145" height="1" fill="#151515"/>
<rect x="1395" y="876" width="1145" height="1" fill="#151515"/>
<rect x="1395" y="905" width="1145" height="1" fill="#151515"/>
<rect x="1413" y="605" width="1" height="324" fill="#151515"/>
<rect x="1488" y="605" width="1" height="324" fill="#151515"/>
<rect x="1564" y="605" width="1" height="324" fill="#151515"/>
<rect x="1639" y="605" width="1" height="324" fill="#151515"/>
<rect x="1715" y="605" width="1" height="324" fill="#151515"/>
<rect x="1790" y="605" width="1" height="324" fill="#151515"/>
<rect x="1866" y="605" width="1" height="324" fill="#151515"/>
<rect x="1941" y="605" width="1" height="324" fill="#151515"/>
<rect x="2017" y="605" width="1" height="324" fill="#151515"/>
<rect x="2092" y="605" width="1" height="324" fill="#151515"/>
<rect x="2168" y="605" width="1" height="324" fill="#151515"/>
<rect x="2243" y="605" width="1" height="324" fill="#151515"/>
<rect x="2319" y="605" width="1" height="324" fill="#151515"/>
<rect x="2394" y="605" width="1" height="324" fill="#151515"/>
<rect x="2470" y="605" width="1" height="324" fill="#151515"/>
<rect x="1395" y="702" width="523" height="1" fill="#bcbd22"/>
<rect x="1918" y="702" width="622" height="1" fill="#b0553c"/>
<polyline points="1894.5,702.5 1899.5,847.5" fill="none" stroke="#7f7f7f" stroke-width="1" shape-rendering="auto"/>
<polyline points="1913.5,847.5 1918.5,702.5" fill="none" stroke="#b0553c" stroke-width="1" shape-rendering="auto"/>
<rect x="1395" y="847" width="1145" height="1" fill="#1a2bdb"/>
<line x1="1866" y1="605" x2="1866" y2="929" stroke="#fff" stroke-width="2" stroke-dasharray="10 2" stroke-dashoffset="2.8"/>
<line x1="2242" y1="605" x2="2242" y2="929" stroke="#fff" stroke-width="2" stroke-dasharray="10 2" stroke-dashoffset="2.8"/>
<rect x="1866" y="904" width="132" height="25" fill="#000" fill-opacity="0.72"/>
<text x="1870.00" y="922.00" font-size="13" fill="#ffffff" textLength="124.4" lengthAdjust="spacingAndGlyphs">T1=-12s,12ms,780µs</text>
<rect x="2124" y="904" width="118" height="25" fill="#000" fill-opacity="0.72"/>
<text x="2237.50" y="922.00" font-size="13" fill="#ffffff" textLength="109.5" lengthAdjust="spacingAndGlyphs" text-anchor="end">T2=-7s,30ms,84µs</text>
<rect x="1990.0" y="605" width="128" height="50" fill="#000" fill-opacity="0.72"/>
<text x="2014.30" y="635.60" font-size="13" fill="#ffffff" textLength="22.6" lengthAdjust="spacingAndGlyphs" text-anchor="end">ΔT=</text>
<text x="2017.40" y="626.00" font-size="13" fill="#ffffff" textLength="98.0" lengthAdjust="spacingAndGlyphs">4s,982ms,696µs</text>
<text x="2017.70" y="646.00" font-size="13" fill="#ffffff" textLength="74.8" lengthAdjust="spacingAndGlyphs">0.200695 Hz</text>
<rect x="1394" y="605" width="1" height="325" fill="#969696"/>
<rect x="1394" y="929" width="1146" height="1" fill="#969696"/>
<text x="1389.40" y="620.50" font-size="13" fill="#ffffff" textLength="18.3" lengthAdjust="spacingAndGlyphs" text-anchor="end">1.6</text>
<text x="1389.40" y="649.43" font-size="13" fill="#ffffff" textLength="18.3" lengthAdjust="spacingAndGlyphs" text-anchor="end">1.4</text>
<text x="1389.40" y="678.36" font-size="13" fill="#ffffff" textLength="18.3" lengthAdjust="spacingAndGlyphs" text-anchor="end">1.2</text>
<text x="1389.40" y="707.29" font-size="13" fill="#ffffff" textLength="7.3" lengthAdjust="spacingAndGlyphs" text-anchor="end">1</text>
<text x="1389.40" y="736.22" font-size="13" fill="#ffffff" textLength="18.3" lengthAdjust="spacingAndGlyphs" text-anchor="end">0.8</text>
<text x="1389.40" y="765.15" font-size="13" fill="#ffffff" textLength="18.3" lengthAdjust="spacingAndGlyphs" text-anchor="end">0.6</text>
<text x="1389.40" y="794.08" font-size="13" fill="#ffffff" textLength="18.3" lengthAdjust="spacingAndGlyphs" text-anchor="end">0.4</text>
<text x="1389.40" y="823.01" font-size="13" fill="#ffffff" textLength="18.3" lengthAdjust="spacingAndGlyphs" text-anchor="end">0.2</text>
<text x="1389.40" y="851.94" font-size="13" fill="#ffffff" textLength="7.3" lengthAdjust="spacingAndGlyphs" text-anchor="end">0</text>
<text x="1389.40" y="880.87" font-size="13" fill="#ffffff" textLength="22.6" lengthAdjust="spacingAndGlyphs" text-anchor="end">-0.2</text>
<text x="1389.40" y="909.80" font-size="13" fill="#ffffff" textLength="22.6" lengthAdjust="spacingAndGlyphs" text-anchor="end">-0.4</text>
<text x="1413.76" y="945.90" font-size="13" fill="#ffffff" textLength="25.3" lengthAdjust="spacingAndGlyphs" text-anchor="middle">-18s</text>
<text x="1489.24" y="945.90" font-size="13" fill="#ffffff" textLength="25.3" lengthAdjust="spacingAndGlyphs" text-anchor="middle">-17s</text>
<text x="1564.73" y="945.90" font-size="13" fill="#ffffff" textLength="25.3" lengthAdjust="spacingAndGlyphs" text-anchor="middle">-16s</text>
<text x="1640.22" y="945.90" font-size="13" fill="#ffffff" textLength="25.3" lengthAdjust="spacingAndGlyphs" text-anchor="middle">-15s</text>
<text x="1715.71" y="945.90" font-size="13" fill="#ffffff" textLength="25.3" lengthAdjust="spacingAndGlyphs" text-anchor="middle">-14s</text>
<text x="1791.20" y="945.90" font-size="13" fill="#ffffff" textLength="25.3" lengthAdjust="spacingAndGlyphs" text-anchor="middle">-13s</text>
<text x="1866.68" y="945.90" font-size="13" fill="#ffffff" textLength="25.3" lengthAdjust="spacingAndGlyphs" text-anchor="middle">-12s</text>
<text x="1942.17" y="945.90" font-size="13" fill="#ffffff" textLength="25.3" lengthAdjust="spacingAndGlyphs" text-anchor="middle">-11s</text>
<text x="2017.66" y="945.90" font-size="13" fill="#ffffff" textLength="25.3" lengthAdjust="spacingAndGlyphs" text-anchor="middle">-10s</text>
<text x="2093.15" y="945.90" font-size="13" fill="#ffffff" textLength="18.1" lengthAdjust="spacingAndGlyphs" text-anchor="middle">-9s</text>
<text x="2168.64" y="945.90" font-size="13" fill="#ffffff" textLength="18.1" lengthAdjust="spacingAndGlyphs" text-anchor="middle">-8s</text>
<text x="2244.12" y="945.90" font-size="13" fill="#ffffff" textLength="18.1" lengthAdjust="spacingAndGlyphs" text-anchor="middle">-7s</text>
<text x="2319.61" y="945.90" font-size="13" fill="#ffffff" textLength="18.1" lengthAdjust="spacingAndGlyphs" text-anchor="middle">-6s</text>
<text x="2395.10" y="945.90" font-size="13" fill="#ffffff" textLength="18.1" lengthAdjust="spacingAndGlyphs" text-anchor="middle">-5s</text>
<text x="2470.59" y="945.90" font-size="13" fill="#ffffff" textLength="18.1" lengthAdjust="spacingAndGlyphs" text-anchor="middle">-4s</text>
<text x="1358.00" y="766.20" font-size="13" fill="#ffffff" textLength="40.5" lengthAdjust="spacingAndGlyphs" text-anchor="middle" transform="rotate(-90 1358.00 766.20)">counts</text>
<rect x="1404.5" y="727.5" width="311" height="161" fill="#222" fill-opacity="0.5" stroke="#aaa" stroke-opacity="0.4"/>
<rect x="1413" y="736" width="19" height="19" fill="#e377c2"/>
<text x="1438.70" y="750.50" font-size="13" fill="#ffffff" textLength="252.0" lengthAdjust="spacingAndGlyphs">H1:SYS-MOTION_C_BDIV_A_OPENSWITCH</text>
<rect x="1413" y="761" width="19" height="19" fill="#7f7f7f"/>
<text x="1438.70" y="775.50" font-size="13" fill="#ffffff" textLength="252.0" lengthAdjust="spacingAndGlyphs">H1:SYS-MOTION_C_BDIV_B_OPENSWITCH</text>
<rect x="1413" y="786" width="19" height="19" fill="#bcbd22"/>
<text x="1438.70" y="800.50" font-size="13" fill="#ffffff" textLength="253.0" lengthAdjust="spacingAndGlyphs">H1:SYS-MOTION_C_BDIV_D_OPENSWITCH</text>
<rect x="1413" y="811" width="19" height="19" fill="#17becf"/>
<text x="1438.70" y="825.50" font-size="13" fill="#ffffff" textLength="265.0" lengthAdjust="spacingAndGlyphs">H1:SYS-MOTION_C_BDIV_A_CLOSEDSWITCH</text>
<rect x="1413" y="836" width="19" height="19" fill="#b0553c"/>
<text x="1438.70" y="850.50" font-size="13" fill="#ffffff" textLength="265.0" lengthAdjust="spacingAndGlyphs">H1:SYS-MOTION_C_BDIV_B_CLOSEDSWITCH</text>
<rect x="1413" y="861" width="19" height="19" fill="#1a2bdb"/>
<text x="1438.70" y="875.50" font-size="13" fill="#ffffff" textLength="266.0" lengthAdjust="spacingAndGlyphs">H1:SYS-MOTION_C_BDIV_D_CLOSEDSWITCH</text>
<line x1="1395" y1="852" x2="2540" y2="852" stroke="#dcdcdc" stroke-width="2" stroke-dasharray="1 2"/>
<line x1="1444" y1="605" x2="1444" y2="929" stroke="#dcdcdc" stroke-width="2" stroke-dasharray="1 2"/>
<text x="1468.00" y="781.50" font-size="13" fill="#f4f4f4" textLength="128.0" lengthAdjust="spacingAndGlyphs">1446418264.0948453</text>
<text x="1449.00" y="802.00" font-size="13" fill="#f4f4f4" textLength="17.0" lengthAdjust="spacingAndGlyphs">T=</text>
<text x="1468.00" y="802.00" font-size="13" fill="#f4f4f4" textLength="148.5" lengthAdjust="spacingAndGlyphs">2025/11/05 22:50:46 UTC</text>
<text x="1467.50" y="822.00" font-size="13" fill="#f4f4f4" textLength="148.5" lengthAdjust="spacingAndGlyphs">2025/11/05 14:50:46 PST</text>
<text x="1449.00" y="842.00" font-size="13" fill="#f4f4f4" textLength="16.0" lengthAdjust="spacingAndGlyphs">Y=</text>
<text x="1469.00" y="842.00" font-size="13" fill="#f4f4f4" textLength="65.0" lengthAdjust="spacingAndGlyphs">-0.0324584</text>
<rect x="67" y="1001" width="1271" height="1" fill="#151515"/>
<rect x="67" y="1040" width="1271" height="1" fill="#151515"/>
<rect x="67" y="1079" width="1271" height="1" fill="#151515"/>
<rect x="67" y="1118" width="1271" height="1" fill="#151515"/>
<rect x="67" y="1157" width="1271" height="1" fill="#151515"/>
<rect x="67" y="1196" width="1271" height="1" fill="#151515"/>
<rect x="87" y="987" width="1" height="223" fill="#151515"/>
<rect x="171" y="987" width="1" height="223" fill="#151515"/>
<rect x="255" y="987" width="1" height="223" fill="#151515"/>
<rect x="339" y="987" width="1" height="223" fill="#151515"/>
<rect x="422" y="987" width="1" height="223" fill="#151515"/>
<rect x="506" y="987" width="1" height="223" fill="#151515"/>
<rect x="590" y="987" width="1" height="223" fill="#151515"/>
<rect x="674" y="987" width="1" height="223" fill="#151515"/>
<rect x="758" y="987" width="1" height="223" fill="#151515"/>
<rect x="842" y="987" width="1" height="223" fill="#151515"/>
<rect x="926" y="987" width="1" height="223" fill="#151515"/>
<rect x="1009" y="987" width="1" height="223" fill="#151515"/>
<rect x="1093" y="987" width="1" height="223" fill="#151515"/>
<rect x="1177" y="987" width="1" height="223" fill="#151515"/>
<rect x="1261" y="987" width="1" height="223" fill="#151515"/>
<rect x="67" y="1001" width="1271" height="1" fill="#18a4b5"/>
<line x1="589" y1="987" x2="589" y2="1210" stroke="#fff" stroke-width="2" stroke-dasharray="10 2" stroke-dashoffset="2.8"/>
<line x1="1007" y1="987" x2="1007" y2="1210" stroke="#fff" stroke-width="2" stroke-dasharray="10 2" stroke-dashoffset="2.8"/>
<rect x="589" y="1185" width="132" height="25" fill="#000" fill-opacity="0.72"/>
<text x="593.00" y="1202.00" font-size="13" fill="#ffffff" textLength="124.4" lengthAdjust="spacingAndGlyphs">T1=-12s,12ms,780µs</text>
<rect x="889" y="1185" width="118" height="25" fill="#000" fill-opacity="0.72"/>
<text x="1002.50" y="1202.00" font-size="13" fill="#ffffff" textLength="109.5" lengthAdjust="spacingAndGlyphs" text-anchor="end">T2=-7s,30ms,84µs</text>
<rect x="734.0" y="987" width="128" height="50" fill="#000" fill-opacity="0.72"/>
<text x="758.30" y="1016.60" font-size="13" fill="#ffffff" textLength="22.6" lengthAdjust="spacingAndGlyphs" text-anchor="end">ΔT=</text>
<text x="761.40" y="1007.00" font-size="13" fill="#ffffff" textLength="98.0" lengthAdjust="spacingAndGlyphs">4s,982ms,696µs</text>
<text x="761.70" y="1027.00" font-size="13" fill="#ffffff" textLength="74.8" lengthAdjust="spacingAndGlyphs">0.200695 Hz</text>
<rect x="66" y="987" width="1" height="224" fill="#969696"/>
<rect x="66" y="1210" width="1272" height="1" fill="#969696"/>
<text x="61.40" y="1006.05" font-size="13" fill="#ffffff" textLength="7.3" lengthAdjust="spacingAndGlyphs" text-anchor="end">1</text>
<text x="61.40" y="1045.10" font-size="13" fill="#ffffff" textLength="18.3" lengthAdjust="spacingAndGlyphs" text-anchor="end">0.8</text>
<text x="61.40" y="1084.15" font-size="13" fill="#ffffff" textLength="18.3" lengthAdjust="spacingAndGlyphs" text-anchor="end">0.6</text>
<text x="61.40" y="1123.20" font-size="13" fill="#ffffff" textLength="18.3" lengthAdjust="spacingAndGlyphs" text-anchor="end">0.4</text>
<text x="61.40" y="1162.25" font-size="13" fill="#ffffff" textLength="18.3" lengthAdjust="spacingAndGlyphs" text-anchor="end">0.2</text>
<text x="61.40" y="1201.30" font-size="13" fill="#ffffff" textLength="7.3" lengthAdjust="spacingAndGlyphs" text-anchor="end">0</text>
<text x="87.80" y="1225.90" font-size="13" fill="#ffffff" textLength="25.3" lengthAdjust="spacingAndGlyphs" text-anchor="middle">-18s</text>
<text x="171.66" y="1225.90" font-size="13" fill="#ffffff" textLength="25.3" lengthAdjust="spacingAndGlyphs" text-anchor="middle">-17s</text>
<text x="255.53" y="1225.90" font-size="13" fill="#ffffff" textLength="25.3" lengthAdjust="spacingAndGlyphs" text-anchor="middle">-16s</text>
<text x="339.39" y="1225.90" font-size="13" fill="#ffffff" textLength="25.3" lengthAdjust="spacingAndGlyphs" text-anchor="middle">-15s</text>
<text x="423.25" y="1225.90" font-size="13" fill="#ffffff" textLength="25.3" lengthAdjust="spacingAndGlyphs" text-anchor="middle">-14s</text>
<text x="507.11" y="1225.90" font-size="13" fill="#ffffff" textLength="25.3" lengthAdjust="spacingAndGlyphs" text-anchor="middle">-13s</text>
<text x="590.97" y="1225.90" font-size="13" fill="#ffffff" textLength="25.3" lengthAdjust="spacingAndGlyphs" text-anchor="middle">-12s</text>
<text x="674.83" y="1225.90" font-size="13" fill="#ffffff" textLength="25.3" lengthAdjust="spacingAndGlyphs" text-anchor="middle">-11s</text>
<text x="758.69" y="1225.90" font-size="13" fill="#ffffff" textLength="25.3" lengthAdjust="spacingAndGlyphs" text-anchor="middle">-10s</text>
<text x="842.55" y="1225.90" font-size="13" fill="#ffffff" textLength="18.1" lengthAdjust="spacingAndGlyphs" text-anchor="middle">-9s</text>
<text x="926.41" y="1225.90" font-size="13" fill="#ffffff" textLength="18.1" lengthAdjust="spacingAndGlyphs" text-anchor="middle">-8s</text>
<text x="1010.27" y="1225.90" font-size="13" fill="#ffffff" textLength="18.1" lengthAdjust="spacingAndGlyphs" text-anchor="middle">-7s</text>
<text x="1094.13" y="1225.90" font-size="13" fill="#ffffff" textLength="18.1" lengthAdjust="spacingAndGlyphs" text-anchor="middle">-6s</text>
<text x="1177.99" y="1225.90" font-size="13" fill="#ffffff" textLength="18.1" lengthAdjust="spacingAndGlyphs" text-anchor="middle">-5s</text>
<text x="1261.85" y="1225.90" font-size="13" fill="#ffffff" textLength="18.1" lengthAdjust="spacingAndGlyphs" text-anchor="middle">-4s</text>
<text x="701.50" y="977.00" font-size="13" fill="#ffffff" textLength="150.0" lengthAdjust="spacingAndGlyphs" text-anchor="middle">H1:OMC-DCPD_A0_GAIN</text>
<text x="33.40" y="1097.70" font-size="13" fill="#ffffff" textLength="40.5" lengthAdjust="spacingAndGlyphs" text-anchor="middle" transform="rotate(-90 33.40 1097.70)">counts</text>
<rect x="1391" y="982" width="1149" height="1" fill="#0d0d0d"/>
<rect x="1391" y="1033" width="1149" height="1" fill="#0d0d0d"/>
<rect x="1391" y="1084" width="1149" height="1" fill="#0d0d0d"/>
<rect x="1391" y="1134" width="1149" height="1" fill="#0d0d0d"/>
<rect x="1391" y="1185" width="1149" height="1" fill="#0d0d0d"/>
<rect x="1391" y="957" width="1149" height="1" fill="#151515"/>
<rect x="1391" y="1008" width="1149" height="1" fill="#151515"/>
<rect x="1391" y="1058" width="1149" height="1" fill="#151515"/>
<rect x="1391" y="1109" width="1149" height="1" fill="#151515"/>
<rect x="1391" y="1159" width="1149" height="1" fill="#151515"/>
<rect x="1391" y="1210" width="1149" height="1" fill="#151515"/>
<rect x="1409" y="957" width="1" height="253" fill="#151515"/>
<rect x="1485" y="957" width="1" height="253" fill="#151515"/>
<rect x="1561" y="957" width="1" height="253" fill="#151515"/>
<rect x="1636" y="957" width="1" height="253" fill="#151515"/>
<rect x="1712" y="957" width="1" height="253" fill="#151515"/>
<rect x="1788" y="957" width="1" height="253" fill="#151515"/>
<rect x="1864" y="957" width="1" height="253" fill="#151515"/>
<rect x="1939" y="957" width="1" height="253" fill="#151515"/>
<rect x="2015" y="957" width="1" height="253" fill="#151515"/>
<rect x="2091" y="957" width="1" height="253" fill="#151515"/>
<rect x="2167" y="957" width="1" height="253" fill="#151515"/>
<rect x="2242" y="957" width="1" height="253" fill="#151515"/>
<rect x="2318" y="957" width="1" height="253" fill="#151515"/>
<rect x="2394" y="957" width="1" height="253" fill="#151515"/>
<rect x="2470" y="957" width="1" height="253" fill="#151515"/>
<rect x="1390" y="957" width="1" height="254" fill="#969696"/>
<rect x="1390" y="1210" width="1150" height="1" fill="#969696"/>
<text x="1385.40" y="962.30" font-size="13" fill="#ffffff" textLength="7.3" lengthAdjust="spacingAndGlyphs" text-anchor="end" clip-path="url(#clipH)">1</text>
<text x="1385.40" y="1012.90" font-size="13" fill="#ffffff" textLength="18.3" lengthAdjust="spacingAndGlyphs" text-anchor="end" clip-path="url(#clipH)">0.8</text>
<text x="1385.40" y="1063.50" font-size="13" fill="#ffffff" textLength="18.3" lengthAdjust="spacingAndGlyphs" text-anchor="end" clip-path="url(#clipH)">0.6</text>
<text x="1385.40" y="1114.10" font-size="13" fill="#ffffff" textLength="18.3" lengthAdjust="spacingAndGlyphs" text-anchor="end" clip-path="url(#clipH)">0.4</text>
<text x="1385.40" y="1164.70" font-size="13" fill="#ffffff" textLength="18.3" lengthAdjust="spacingAndGlyphs" text-anchor="end" clip-path="url(#clipH)">0.2</text>
<text x="1385.40" y="1215.30" font-size="13" fill="#ffffff" textLength="7.3" lengthAdjust="spacingAndGlyphs" text-anchor="end" clip-path="url(#clipH)">0</text>
<text x="1409.82" y="1225.90" font-size="13" fill="#ffffff" textLength="25.3" lengthAdjust="spacingAndGlyphs" text-anchor="middle">-18s</text>
<text x="1485.57" y="1225.90" font-size="13" fill="#ffffff" textLength="25.3" lengthAdjust="spacingAndGlyphs" text-anchor="middle">-17s</text>
<text x="1561.32" y="1225.90" font-size="13" fill="#ffffff" textLength="25.3" lengthAdjust="spacingAndGlyphs" text-anchor="middle">-16s</text>
<text x="1637.08" y="1225.90" font-size="13" fill="#ffffff" textLength="25.3" lengthAdjust="spacingAndGlyphs" text-anchor="middle">-15s</text>
<text x="1712.83" y="1225.90" font-size="13" fill="#ffffff" textLength="25.3" lengthAdjust="spacingAndGlyphs" text-anchor="middle">-14s</text>
<text x="1788.58" y="1225.90" font-size="13" fill="#ffffff" textLength="25.3" lengthAdjust="spacingAndGlyphs" text-anchor="middle">-13s</text>
<text x="1864.33" y="1225.90" font-size="13" fill="#ffffff" textLength="25.3" lengthAdjust="spacingAndGlyphs" text-anchor="middle">-12s</text>
<text x="1940.08" y="1225.90" font-size="13" fill="#ffffff" textLength="25.3" lengthAdjust="spacingAndGlyphs" text-anchor="middle">-11s</text>
<text x="2015.83" y="1225.90" font-size="13" fill="#ffffff" textLength="25.3" lengthAdjust="spacingAndGlyphs" text-anchor="middle">-10s</text>
<text x="2091.59" y="1225.90" font-size="13" fill="#ffffff" textLength="18.1" lengthAdjust="spacingAndGlyphs" text-anchor="middle">-9s</text>
<text x="2167.34" y="1225.90" font-size="13" fill="#ffffff" textLength="18.1" lengthAdjust="spacingAndGlyphs" text-anchor="middle">-8s</text>
<text x="2243.09" y="1225.90" font-size="13" fill="#ffffff" textLength="18.1" lengthAdjust="spacingAndGlyphs" text-anchor="middle">-7s</text>
<text x="2318.84" y="1225.90" font-size="13" fill="#ffffff" textLength="18.1" lengthAdjust="spacingAndGlyphs" text-anchor="middle">-6s</text>
<text x="2394.59" y="1225.90" font-size="13" fill="#ffffff" textLength="18.1" lengthAdjust="spacingAndGlyphs" text-anchor="middle">-5s</text>
<text x="2470.34" y="1225.90" font-size="13" fill="#ffffff" textLength="18.1" lengthAdjust="spacingAndGlyphs" text-anchor="middle">-4s</text>
<text x="1358.00" y="1085.00" font-size="13" fill="#ffffff" textLength="40.5" lengthAdjust="spacingAndGlyphs" text-anchor="middle" transform="rotate(-90 1358.00 1085.00)">counts</text>
<text x="1280.00" y="1268.00" font-size="16" fill="#ffffff" textLength="412.0" lengthAdjust="spacingAndGlyphs" text-anchor="middle">t0 = Wed Nov 05 2025 22:51:03 UTC [1446418281.6875]</text>
<rect x="2.5" y="1288.5" width="99" height="37.6" rx="3.5" fill="url(#btn)" stroke="#a2a2a2" shape-rendering="auto"/>
<rect x="3.5" y="1289.5" width="97" height="1" fill="#ffffff" fill-opacity="0.7"/>
<path d="M12.5 1302.5 L20.5 1307.2 L12.5 1312 Z" fill="#fafafa" stroke="#bcbcbc" stroke-width="1" shape-rendering="auto"/>
<text x="27.00" y="1311.60" font-size="12.4" fill="#1b1b1b" textLength="64.4" lengthAdjust="spacingAndGlyphs">start online</text>
<rect x="2.5" y="1329.5" width="99" height="23.6" rx="3.5" fill="url(#btnd)" stroke="#b4b4b4" shape-rendering="auto"/>
<rect x="3.5" y="1330.5" width="97" height="1" fill="#ffffff" fill-opacity="0.7"/>
<rect x="13.5" y="1337.5" width="8" height="8" fill="#f6f6f6" stroke="#d2d2d2" shape-rendering="auto"/>
<text x="28.00" y="1345.40" font-size="12.4" fill="#b9b9b9" textLength="62.6" lengthAdjust="spacingAndGlyphs">stop online</text>
<rect x="2.5" y="1356.5" width="99" height="23.6" rx="3.5" fill="url(#btn)" stroke="#a2a2a2" shape-rendering="auto"/>
<rect x="3.5" y="1357.5" width="97" height="1" fill="#ffffff" fill-opacity="0.7"/>
<text x="52.00" y="1372.80" font-size="12.4" fill="#1b1b1b" textLength="28.4" lengthAdjust="spacingAndGlyphs" text-anchor="middle">reset</text>
<rect x="2.5" y="1383.5" width="99" height="23.6" rx="3.5" fill="url(#btn)" stroke="#a2a2a2" shape-rendering="auto"/>
<rect x="3.5" y="1384.5" width="97" height="1" fill="#ffffff" fill-opacity="0.7"/>
<text x="52.00" y="1399.50" font-size="12.4" fill="#1b1b1b" textLength="75.0" lengthAdjust="spacingAndGlyphs" text-anchor="middle">add channels</text>
<rect x="108" y="1315" width="2416" height="1" fill="#bcbcbc"/>
<path d="M108.5 1315.5 V1293.5 Q108.5 1290.5 111.5 1290.5 H160.5 Q163.5 1290.5 163.5 1293.5 V1315.5" fill="url(#tabg)" stroke="#c3c3c3" shape-rendering="auto"/>
<text x="119.70" y="1307.40" font-size="12.4" fill="#1b1b1b" textLength="31.3" lengthAdjust="spacingAndGlyphs">trend</text>
<path d="M163.5 1315.5 V1293.5 Q163.5 1290.5 166.5 1290.5 H229.5 Q232.5 1290.5 232.5 1293.5 V1315.5" fill="url(#tabg)" stroke="#c3c3c3" shape-rendering="auto"/>
<text x="175.00" y="1307.40" font-size="12.4" fill="#1b1b1b" textLength="44.6" lengthAdjust="spacingAndGlyphs">window</text>
<path d="M232.5 1315.5 V1293.5 Q232.5 1290.5 235.5 1290.5 H286.5 Q289.5 1290.5 289.5 1293.5 V1315.5" fill="url(#tabg)" stroke="#c3c3c3" shape-rendering="auto"/>
<text x="243.90" y="1307.40" font-size="12.4" fill="#1b1b1b" textLength="32.9" lengthAdjust="spacingAndGlyphs">range</text>
<path d="M289.5 1315.5 V1293.5 Q289.5 1290.5 292.5 1290.5 H349.5 Q352.5 1290.5 352.5 1293.5 V1315.5" fill="url(#tabg)" stroke="#c3c3c3" shape-rendering="auto"/>
<text x="300.50" y="1307.40" font-size="12.4" fill="#1b1b1b" textLength="39.6" lengthAdjust="spacingAndGlyphs">trigger</text>
<path d="M428.5 1315.5 V1293.5 Q428.5 1290.5 431.5 1290.5 H500.5 Q503.5 1290.5 503.5 1293.5 V1315.5" fill="url(#tabg)" stroke="#c3c3c3" shape-rendering="auto"/>
<text x="439.60" y="1307.40" font-size="12.4" fill="#1b1b1b" textLength="51.1" lengthAdjust="spacingAndGlyphs">time axis</text>
<path d="M503.5 1315.5 V1293.5 Q503.5 1290.5 506.5 1290.5 H551.5 Q554.5 1290.5 554.5 1293.5 V1315.5" fill="url(#tabg)" stroke="#c3c3c3" shape-rendering="auto"/>
<text x="514.70" y="1307.40" font-size="12.4" fill="#1b1b1b" textLength="26.6" lengthAdjust="spacingAndGlyphs">style</text>
<path d="M554.5 1315.5 V1293.5 Q554.5 1290.5 557.5 1290.5 H612.5 Q615.5 1290.5 615.5 1293.5 V1315.5" fill="url(#tabg)" stroke="#c3c3c3" shape-rendering="auto"/>
<text x="565.60" y="1307.40" font-size="12.4" fill="#1b1b1b" textLength="37.5" lengthAdjust="spacingAndGlyphs">export</text>
<path d="M352.5 1316.5 V1291.5 Q352.5 1288.5 355.5 1288.5 H425.5 Q428.5 1288.5 428.5 1291.5 V1316.5" fill="url(#tabs)" stroke="#c3c3c3" shape-rendering="auto"/>
<rect x="353.0" y="1313" width="75.0" height="4" fill="#efefef"/>
<text x="363.70" y="1306.50" font-size="12.4" fill="#1b1b1b" textLength="51.6" lengthAdjust="spacingAndGlyphs">crosshair</text>
<rect x="118.5" y="1323.5" width="13" height="13" rx="1.5" fill="#fff" stroke="#b9b9b9" shape-rendering="auto"/>
<path d="M121.3 1330.2 L124.2 1333.6 L128.8 1325.8" fill="none" stroke="#111" stroke-width="1.9" shape-rendering="auto"/>
<text x="136.00" y="1334.60" font-size="12.4" fill="#1b1b1b" textLength="38.2" lengthAdjust="spacingAndGlyphs">enable</text>
<rect x="118.5" y="1342.5" width="2396" height="63" rx="2" fill="#ebebeb" stroke="#d3d3d3" shape-rendering="auto"/>
<text x="120.30" y="1360.90" font-size="12.4" fill="#1b1b1b" textLength="28.6" lengthAdjust="spacingAndGlyphs">time:</text>
<text x="138.80" y="1391.80" font-size="12.4" fill="#1b1b1b" textLength="10.0" lengthAdjust="spacingAndGlyphs">Y:</text>
<rect x="155.5" y="1344.5" width="149.0" height="24.0" rx="2.5" fill="#fff" stroke="#c2c2c2" shape-rendering="auto"/>
<text x="158.10" y="1360.90" font-size="12.4" fill="#1b1b1b" textLength="119.7" lengthAdjust="spacingAndGlyphs">1446418264.0948453</text>
<rect x="311.5" y="1344.5" width="179.0" height="24.0" rx="2.5" fill="#fff" stroke="#c2c2c2" shape-rendering="auto"/>
<text x="314.10" y="1360.90" font-size="12.4" fill="#1b1b1b" textLength="140.2" lengthAdjust="spacingAndGlyphs">2025/11/05 22:50:46 UTC</text>
<rect x="497.5" y="1344.5" width="179.0" height="24.0" rx="2.5" fill="#fff" stroke="#c2c2c2" shape-rendering="auto"/>
<text x="500.10" y="1360.90" font-size="12.4" fill="#1b1b1b" textLength="137.4" lengthAdjust="spacingAndGlyphs">2025/11/05 14:50:46 PST</text>
<rect x="155.5" y="1375.5" width="149.0" height="24.0" rx="2.5" fill="#fff" stroke="#c2c2c2" shape-rendering="auto"/>
<text x="158.10" y="1391.90" font-size="12.4" fill="#1b1b1b" textLength="130.7" lengthAdjust="spacingAndGlyphs">-0.03245840672376543</text>
<path d="M2537.4 1362.8 H2550.6 L2544 1370.7 Z" fill="#2e3436" shape-rendering="auto"/>
<text x="6.00" y="1429.80" font-size="12.4" fill="#151515" textLength="119.0" lengthAdjust="spacingAndGlyphs">Retrieving raw data...</text>
</svg></body></html>
